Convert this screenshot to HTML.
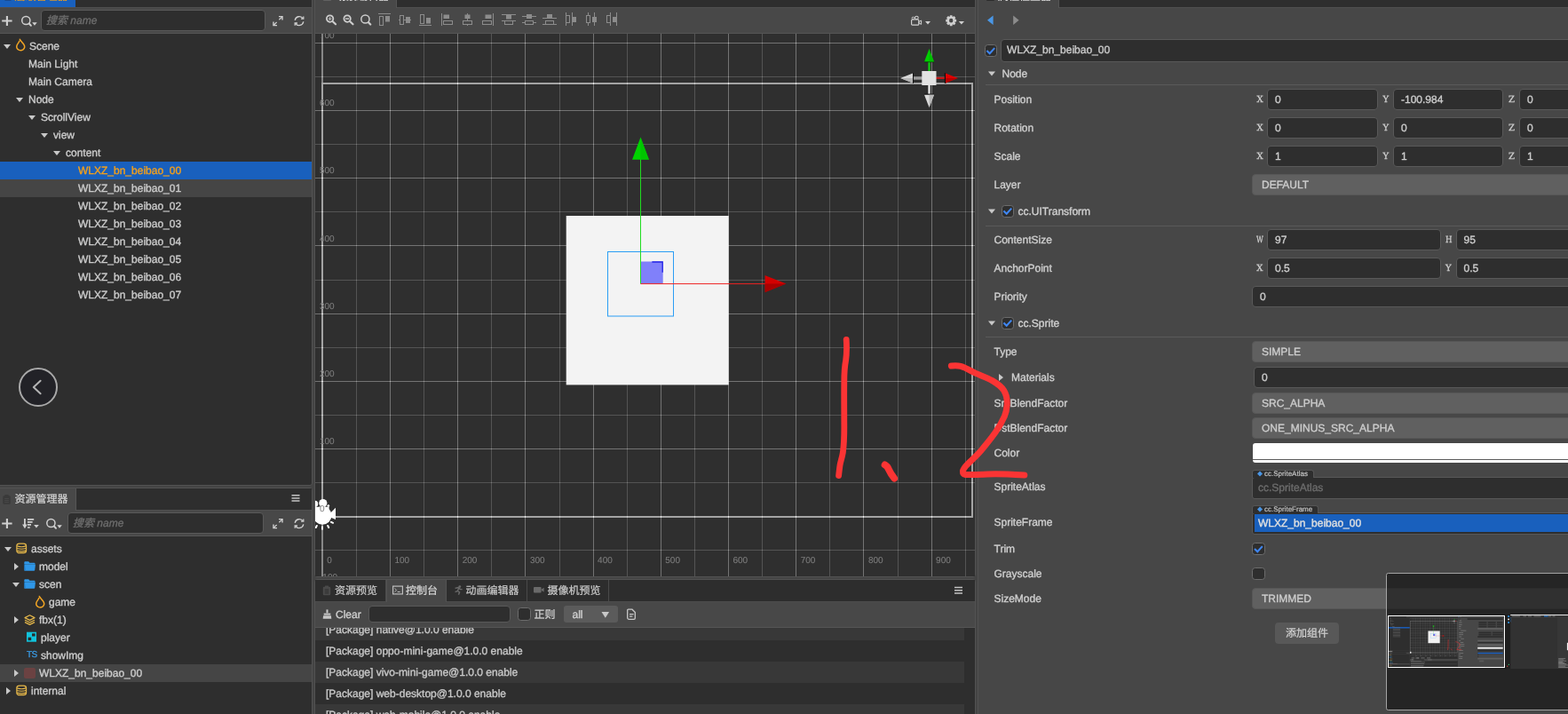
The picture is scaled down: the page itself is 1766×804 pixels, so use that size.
<!DOCTYPE html>
<html lang="zh-CN"><head><meta charset="utf-8"><title>Cocos Creator</title>
<style>
*{box-sizing:border-box;margin:0;padding:0}
html,body{width:1766px;height:804px;overflow:hidden;background:#444;-webkit-font-smoothing:antialiased;text-rendering:geometricPrecision}
body{position:relative;font-family:"Liberation Sans","Noto Sans CJK SC",sans-serif;font-size:12px;color:#ccc;line-height:20px;-webkit-text-stroke:0.35px currentColor;}
#app{position:absolute;left:0;top:0;width:1766px;height:804px;overflow:hidden;will-change:transform;transform:translateZ(0)}
.abs{position:absolute}
.panel{position:absolute;background:#2e2e2e;border:1px solid #525252;border-radius:3px;overflow:hidden}
.inp{position:absolute;background:#2e2e2e;border:1px solid #595959;border-radius:4px;color:#ccc;white-space:nowrap;overflow:hidden}
.ph{font-style:italic;color:#6c6c6c;position:absolute;left:5px;top:0;line-height:22px}
.row{position:absolute;left:0;right:0;height:20px;line-height:20px;white-space:nowrap}
.row .t{position:absolute;top:0}
.sel{background:#1960bd}
.hov{background:#454545}
svg{position:absolute;overflow:visible}
.lab{position:absolute;white-space:nowrap;line-height:20px;height:20px}
.mono{font-family:"DejaVu Serif","Liberation Serif",serif;font-size:10px;font-weight:normal;-webkit-text-stroke:0.25px currentColor;position:absolute;line-height:20px;color:#d2d2d2}
.dd{position:absolute;background:#606060;border:1px solid #575757;border-radius:4px;height:24px;line-height:22px;padding-left:10px;color:#ccc;white-space:nowrap;overflow:hidden}
.cb{position:absolute;width:14px;height:14px;background:#2e2e2e;border:1px solid #6c6c6c;border-radius:3.5px}
.cjk{font-weight:400;-webkit-text-stroke:0.22px currentColor}
.gl{position:absolute;font-size:10px;color:#7c7c7c;-webkit-text-stroke:0.1px currentColor;line-height:12px;white-space:nowrap}
</style></head>
<body>
<div id="app">
<div class="panel" style="left:-5px;top:-17px;width:357px;height:564px;"></div>
<div class="abs" style="left:0px;top:-16px;width:351px;height:24px;background:#2e2e2e"></div>
<div class="abs" style="left:0px;top:8px;width:351px;height:1px;background:#4f4f4f"></div>
<div class="abs" style="left:0px;top:-16px;width:85.4px;height:24px;background:#1960bd"></div>
<svg style="left:4px;top:-11px" width="10" height="12" viewBox="-0.5 -0.6 10 12"><rect x="0.3" y="1.2" width="8.4" height="9.6" rx="1.2" fill="#1c3560"/><rect x="2.4" y="0" width="4.2" height="2.2" rx="0.6" fill="#1c3560"/><path d="M2.2 4.4H6.8M2.2 6.4H6.8M2.2 8.4H6.8" stroke="#1a5fbf" stroke-width="0.9"/></svg>
<div class="lab cjk" style="left:16.5px;top:-15px;color:#f5a01a;line-height:23px;height:24px">层级管理器</div>
<div class="abs" style="left:0px;top:9px;width:351px;height:28px;background:#484848"></div>
<div class="abs" style="left:0px;top:37px;width:351px;height:1px;background:#555"></div>
<svg style="left:1px;top:17px" width="13" height="13" viewBox="-0.9 -0.5 13 13"><path d="M6 0.4V11.4M0.3 6H11.7" stroke="#d0d0d0" stroke-width="2.1" fill="none"/></svg>
<svg style="left:23px;top:17px" width="20" height="14" viewBox="-0.9 -0.2 20 14"><circle cx="5.4" cy="5.8" r="4.6" stroke="#d0d0d0" stroke-width="1.5" fill="none"/><path d="M8.9 9.3L11 11.6" stroke="#d0d0d0" stroke-width="2" stroke-linecap="round"/><polygon points="12.3,8.1 17.8,8.1 15.05,11.5" fill="#d0d0d0"/></svg>
<div class="inp" style="left:46px;top:11px;width:253px;height:24px;"><span class="ph">搜索 name</span></div>
<svg style="left:307px;top:17px" width="13" height="13" viewBox="0 -0.6 13 13"><path d="M1 11L4.6 7.4M11 1L7.4 4.6" stroke="#d0d0d0" stroke-width="1.3" fill="none"/><path d="M7 1H11V5" stroke="#d0d0d0" stroke-width="1.4" fill="none"/><path d="M1 7V11H5" stroke="#d0d0d0" stroke-width="1.4" fill="none"/></svg>
<svg style="left:331px;top:17px" width="13" height="13" viewBox="0 -0.6 13 13"><path d="M1.2 5.2A5 5 0 0 1 10.3 3.3" stroke="#d0d0d0" stroke-width="1.3" fill="none"/><path d="M10.8 6.8A5 5 0 0 1 1.7 8.7" stroke="#d0d0d0" stroke-width="1.3" fill="none"/><path d="M8 3.6H10.8V0.8" stroke="#d0d0d0" stroke-width="1.3" fill="none"/><path d="M4 8.4H1.2V11.2" stroke="#d0d0d0" stroke-width="1.3" fill="none"/></svg>
<div class="row" style="top:42px;width:351px"><span class="t" style="left:33px;">Scene</span></div>
<svg style="left:4px;top:50px" width="9" height="6" viewBox="0 0 9 6"><polygon points="0,0 8,0 4.0,5" fill="#c8c8c8"/></svg>
<svg style="left:17px;top:43px" width="12" height="15" viewBox="-0.8 -0.6 12 15"><path d="M4.5 0.7C5.4 2.6 7.8 4.4 9.2 6.8C10.3 8.8 10 10.9 8.2 12.3C6.8 13.3 4.6 13.3 3.3 12.6C1.2 11.4 0.6 9.4 1.2 7.6C1.9 5.6 3.5 4.4 4 2.7" stroke="#f2a524" stroke-width="1.5" fill="none" stroke-linejoin="round" stroke-linecap="round"/></svg>
<div class="row" style="top:62px;width:351px"><span class="t" style="left:32px;">Main Light</span></div>
<div class="row" style="top:82px;width:351px"><span class="t" style="left:32px;">Main Camera</span></div>
<div class="row" style="top:102px;width:351px"><span class="t" style="left:32px;">Node</span></div>
<svg style="left:18px;top:110px" width="9" height="6" viewBox="0 0 9 6"><polygon points="0,0 8,0 4.0,5" fill="#c8c8c8"/></svg>
<div class="row" style="top:122px;width:351px"><span class="t" style="left:46px;">ScrollView</span></div>
<svg style="left:32px;top:130px" width="9" height="6" viewBox="0 0 9 6"><polygon points="0,0 8,0 4.0,5" fill="#c8c8c8"/></svg>
<div class="row" style="top:142px;width:351px"><span class="t" style="left:60px;">view</span></div>
<svg style="left:46px;top:150px" width="9" height="6" viewBox="0 0 9 6"><polygon points="0,0 8,0 4.0,5" fill="#c8c8c8"/></svg>
<div class="row" style="top:162px;width:351px"><span class="t" style="left:74px;">content</span></div>
<svg style="left:60px;top:170px" width="9" height="6" viewBox="0 0 9 6"><polygon points="0,0 8,0 4.0,5" fill="#c8c8c8"/></svg>
<div class="row sel" style="top:182px;width:351px"><span class="t" style="left:88px;color:#f5a01a;">WLXZ_bn_beibao_00</span></div>
<div class="row hov" style="top:202px;width:351px"><span class="t" style="left:88px;">WLXZ_bn_beibao_01</span></div>
<div class="row" style="top:222px;width:351px"><span class="t" style="left:88px;">WLXZ_bn_beibao_02</span></div>
<div class="row" style="top:242px;width:351px"><span class="t" style="left:88px;">WLXZ_bn_beibao_03</span></div>
<div class="row" style="top:262px;width:351px"><span class="t" style="left:88px;">WLXZ_bn_beibao_04</span></div>
<div class="row" style="top:282px;width:351px"><span class="t" style="left:88px;">WLXZ_bn_beibao_05</span></div>
<div class="row" style="top:302px;width:351px"><span class="t" style="left:88px;">WLXZ_bn_beibao_06</span></div>
<div class="row" style="top:322px;width:351px"><span class="t" style="left:88px;">WLXZ_bn_beibao_07</span></div>
<div class="abs" style="left:21px;top:414px;width:44px;height:44px;border:2px solid #a9a9a9;border-radius:50%;background:#222227"></div>
<svg style="left:21px;top:414px" width="45" height="45" viewBox="0 0 45 45"><path d="M24.6 14.8L16.8 22L24.6 29.2" stroke="#b4b4b4" stroke-width="2" fill="none" stroke-linecap="round" stroke-linejoin="round"/></svg>
<div class="panel" style="left:-5px;top:549px;width:357px;height:270px;"></div>
<div class="abs" style="left:0px;top:550px;width:351px;height:24px;background:#2e2e2e"></div>
<div class="abs" style="left:0px;top:574px;width:351px;height:1px;background:#4f4f4f"></div>
<div class="abs" style="left:0px;top:550px;width:86px;height:25px;background:#484848;border-right:1px solid #555"></div>
<svg style="left:3px;top:557px" width="10" height="12" viewBox="0 0 10 12"><rect x="0.3" y="1.2" width="8.4" height="9.6" rx="1.2" fill="#3a3a3a"/><rect x="2.4" y="0" width="4.2" height="2.2" rx="0.6" fill="#3a3a3a"/><path d="M2.2 4.4H6.8M2.2 6.4H6.8M2.2 8.4H6.8" stroke="#4c4c4c" stroke-width="0.9"/></svg>
<div class="lab cjk" style="left:16.5px;top:551px;color:#d2d2d2;line-height:23px;height:24px">资源管理器</div>
<svg style="left:328px;top:556px" width="10" height="10" viewBox="-0.5 -0.5 10 10"><path d="M0 1.2H9M0 4.4H9M0 7.6H9" stroke="#c4c4c4" stroke-width="1.5"/></svg>
<div class="abs" style="left:0px;top:575px;width:351px;height:28px;background:#484848"></div>
<div class="abs" style="left:0px;top:603px;width:351px;height:1px;background:#555"></div>
<svg style="left:1px;top:583px" width="13" height="13" viewBox="-0.9 -0.5 13 13"><path d="M6 0.4V11.4M0.3 6H11.7" stroke="#d0d0d0" stroke-width="2.1" fill="none"/></svg>
<svg style="left:25px;top:584px" width="20" height="13" viewBox="0 0 20 13"><path d="M2.9 0V9" stroke="#d0d0d0" stroke-width="1.8"/><path d="M0.1 6.6L2.9 11.2L5.7 6.6Z" fill="#d0d0d0"/><path d="M6 0.9H13.2M6 3.9H11.6M6 6.9H10M6 10H8.8" stroke="#d0d0d0" stroke-width="1.7"/><polygon points="13.1,7.1 18.8,7.1 15.95,10.5" fill="#d0d0d0"/></svg>
<svg style="left:52px;top:583px" width="20" height="14" viewBox="0 -0.2 20 14"><circle cx="5.4" cy="5.8" r="4.6" stroke="#d0d0d0" stroke-width="1.5" fill="none"/><path d="M8.9 9.3L11 11.6" stroke="#d0d0d0" stroke-width="2" stroke-linecap="round"/><polygon points="12.3,8.1 17.8,8.1 15.05,11.5" fill="#d0d0d0"/></svg>
<div class="inp" style="left:76px;top:577px;width:221px;height:24px;"><span class="ph">搜索 name</span></div>
<svg style="left:307px;top:583px" width="13" height="13" viewBox="0 -0.6 13 13"><path d="M1 11L4.6 7.4M11 1L7.4 4.6" stroke="#d0d0d0" stroke-width="1.3" fill="none"/><path d="M7 1H11V5" stroke="#d0d0d0" stroke-width="1.4" fill="none"/><path d="M1 7V11H5" stroke="#d0d0d0" stroke-width="1.4" fill="none"/></svg>
<svg style="left:331px;top:583px" width="13" height="13" viewBox="0 -0.6 13 13"><path d="M1.2 5.2A5 5 0 0 1 10.3 3.3" stroke="#d0d0d0" stroke-width="1.3" fill="none"/><path d="M10.8 6.8A5 5 0 0 1 1.7 8.7" stroke="#d0d0d0" stroke-width="1.3" fill="none"/><path d="M8 3.6H10.8V0.8" stroke="#d0d0d0" stroke-width="1.3" fill="none"/><path d="M4 8.4H1.2V11.2" stroke="#d0d0d0" stroke-width="1.3" fill="none"/></svg>
<div class="row" style="top:608px;width:351px"><span class="t" style="left:35px">assets</span></div>
<svg style="left:5px;top:616px" width="9" height="6" viewBox="0 0 9 6"><polygon points="0,0 8,0 4.0,5" fill="#c8c8c8"/></svg>
<svg style="left:18px;top:611px" width="13" height="13" viewBox="-0.2 -0.4 13 13"><rect x="0.7" y="0.7" width="10.6" height="10.6" rx="3" ry="2.4" stroke="#e6b84a" stroke-width="1.3" fill="none"/><path d="M1 3.4C3 4.6 9 4.6 11 3.4" stroke="#e6b84a" stroke-width="1.1" fill="none"/><path d="M1 6C3 7.2 9 7.2 11 6" stroke="#e6b84a" stroke-width="1.1" fill="none"/><path d="M1 8.6C3 9.799999999999999 9 9.799999999999999 11 8.6" stroke="#e6b84a" stroke-width="1.1" fill="none"/></svg>
<div class="row" style="top:628px;width:351px"><span class="t" style="left:44px">model</span></div>
<svg style="left:16px;top:634px" width="6" height="9" viewBox="0 0 6 9"><polygon points="0,0 5,4.0 0,8" fill="#c8c8c8"/></svg>
<svg style="left:27px;top:632px" width="14" height="12" viewBox="0 0 14 12"><path d="M0.3 1.2C0.3 0.7 0.7 0.3 1.2 0.3H5.2L6.4 1.8H11.6C12.1 1.8 12.5 2.2 12.5 2.7V3.6H0.3Z" fill="#2f97e8"/><path d="M1.3 3.4H12.4C12.8 3.4 13 3.7 12.9 4.1L12.2 10C12.1 10.5 11.8 10.8 11.3 10.8H1.2C0.7 10.8 0.3 10.4 0.3 9.9V4.4Z" fill="#2f97e8"/><path d="M0.3 3.5L1.2 10.2" stroke="#1d6fb4" stroke-width="0.8" fill="none"/></svg>
<div class="row" style="top:648px;width:351px"><span class="t" style="left:44px">scen</span></div>
<svg style="left:14px;top:656px" width="9" height="6" viewBox="0 0 9 6"><polygon points="0,0 8,0 4.0,5" fill="#c8c8c8"/></svg>
<svg style="left:27px;top:652px" width="14" height="12" viewBox="0 0 14 12"><path d="M0.3 1.2C0.3 0.7 0.7 0.3 1.2 0.3H5.2L6.4 1.8H11.6C12.1 1.8 12.5 2.2 12.5 2.7V3.6H0.3Z" fill="#2f97e8"/><path d="M1.3 3.4H12.4C12.8 3.4 13 3.7 12.9 4.1L12.2 10C12.1 10.5 11.8 10.8 11.3 10.8H1.2C0.7 10.8 0.3 10.4 0.3 9.9V4.4Z" fill="#2f97e8"/><path d="M0.3 3.5L1.2 10.2" stroke="#1d6fb4" stroke-width="0.8" fill="none"/></svg>
<div class="row" style="top:668px;width:351px"><span class="t" style="left:55px">game</span></div>
<svg style="left:39px;top:670px" width="12" height="15" viewBox="-0.8 -0.8 12 15"><path d="M4.5 0.7C5.4 2.6 7.8 4.4 9.2 6.8C10.3 8.8 10 10.9 8.2 12.3C6.8 13.3 4.6 13.3 3.3 12.6C1.2 11.4 0.6 9.4 1.2 7.6C1.9 5.6 3.5 4.4 4 2.7" stroke="#f2a524" stroke-width="1.5" fill="none" stroke-linejoin="round" stroke-linecap="round"/></svg>
<div class="row" style="top:688px;width:351px"><span class="t" style="left:44px">fbx(1)</span></div>
<svg style="left:16px;top:694px" width="6" height="9" viewBox="0 0 6 9"><polygon points="0,0 5,4.0 0,8" fill="#c8c8c8"/></svg>
<svg style="left:27px;top:692px" width="14" height="13" viewBox="0 0 14 13"><path d="M6.5 0.8L12 3.6L6.5 6.4L1 3.6Z" stroke="#e6b84a" stroke-width="1.2" fill="none" stroke-linejoin="round"/><path d="M1 6.2L6.5 9L12 6.2" stroke="#e6b84a" stroke-width="1.2" fill="none" stroke-linejoin="round"/><path d="M1 8.6L6.5 11.4L12 8.6" stroke="#e6b84a" stroke-width="1.2" fill="none" stroke-linejoin="round"/></svg>
<div class="row" style="top:708px;width:351px"><span class="t" style="left:46px">player</span></div>
<svg style="left:30px;top:711px" width="12" height="12" viewBox="0 -0.7 12 12"><rect x="0" y="0" width="11" height="11" fill="#11c3dc"/><rect x="6" y="1.6" width="3.6" height="3.2" fill="#2b2b2b"/><rect x="1.6" y="6" width="3.6" height="3.4" fill="#2b2b2b"/></svg>
<div class="row" style="top:728px;width:351px"><span class="t" style="left:46px">showImg</span></div>
<div class="lab" style="left:30px;top:728px;color:#3a9be6;font-size:10px;letter-spacing:-0.6px;-webkit-text-stroke:0.3px currentColor">TS</div>
<div class="row hov" style="top:748px;width:351px"><span class="t" style="left:44px">WLXZ_bn_beibao_00</span></div>
<svg style="left:16px;top:754px" width="6" height="9" viewBox="0 0 6 9"><polygon points="0,0 5,4.0 0,8" fill="#c8c8c8"/></svg>
<div class="abs" style="left:27px;top:752px;width:13px;height:12px;background:#6b4242;border-radius:2px"></div>
<div class="row" style="top:768px;width:351px"><span class="t" style="left:35px">internal</span></div>
<svg style="left:7px;top:774px" width="6" height="9" viewBox="0 0 6 9"><polygon points="0,0 5,4.0 0,8" fill="#c8c8c8"/></svg>
<svg style="left:18px;top:771px" width="13" height="13" viewBox="-0.2 -0.4 13 13"><rect x="0.7" y="0.7" width="10.6" height="10.6" rx="3" ry="2.4" stroke="#e6b84a" stroke-width="1.3" fill="none"/><path d="M1 3.4C3 4.6 9 4.6 11 3.4" stroke="#e6b84a" stroke-width="1.1" fill="none"/><path d="M1 6C3 7.2 9 7.2 11 6" stroke="#e6b84a" stroke-width="1.1" fill="none"/><path d="M1 8.6C3 9.799999999999999 9 9.799999999999999 11 8.6" stroke="#e6b84a" stroke-width="1.1" fill="none"/></svg>
<div class="panel" style="left:354px;top:-17px;width:745px;height:667px;"></div>
<div class="abs" style="left:355px;top:-16px;width:743px;height:24px;background:#2e2e2e"></div>
<div class="abs" style="left:355px;top:8px;width:743px;height:1px;background:#4f4f4f"></div>
<div class="abs" style="left:355px;top:-16px;width:92px;height:25px;background:#484848;border-right:1px solid #555"></div>
<div class="abs" style="left:363.5px;top:-8.4px;width:9px;height:9px;background:#626262;border-radius:1px"></div>
<div class="lab cjk" style="left:378px;top:-15px;color:#e2e2e2;line-height:23px;height:24px">场景编辑器</div>
<div class="abs" style="left:355px;top:9px;width:743px;height:28px;background:#484848"></div>
<div class="abs" style="left:355px;top:37px;width:743px;height:1px;background:#555"></div>
<svg style="left:367px;top:16px" width="13" height="13" viewBox="0 -0.3 13 13"><circle cx="4.6" cy="4.8" r="3.7" stroke="#cdcdcd" stroke-width="1.8" fill="none"/><path d="M7.8 8L11 11" stroke="#cdcdcd" stroke-width="2.2" stroke-linecap="round"/><path d="M2.8 4.8H6.4M4.6 3V6.6" stroke="#b0b0b0" stroke-width="1.3"/></svg>
<svg style="left:386px;top:16px" width="13" height="13" viewBox="-0.5 -0.3 13 13"><circle cx="4.6" cy="4.8" r="3.7" stroke="#cdcdcd" stroke-width="1.8" fill="none"/><path d="M7.8 8L11 11" stroke="#cdcdcd" stroke-width="2.2" stroke-linecap="round"/><path d="M2.6 4.8H6.6" stroke="#cdcdcd" stroke-width="1.5"/></svg>
<svg style="left:406px;top:16px" width="13" height="13" viewBox="0 -0.3 13 13"><circle cx="5.4" cy="5.2" r="4.6" stroke="#cdcdcd" stroke-width="1.5" fill="none"/><path d="M9 9L11.2 11.2" stroke="#cdcdcd" stroke-width="2.3" stroke-linecap="round"/></svg>
<svg style="left:426px;top:15px" width="15" height="15" viewBox="0 0 15 15"><path d="M0 0.5H14" stroke="#8c8c8c" stroke-width="1" fill="none"/><rect x="1.5" y="3.5" width="4" height="10" stroke="#8c8c8c" stroke-width="1" fill="none"/><rect x="8" y="3" width="5" height="6.5" fill="#8c8c8c"/></svg><svg style="left:449px;top:15px" width="15" height="15" viewBox="0 0 15 15"><path d="M0 7.5H14" stroke="#8c8c8c" stroke-width="1" fill="none"/><rect x="1.5" y="2.5" width="4" height="10" fill="#484848" stroke="#8c8c8c"/><rect x="8" y="4" width="5" height="7" fill="#8c8c8c"/></svg><svg style="left:472px;top:15px" width="15" height="15" viewBox="0 0 15 15"><path d="M0 13.5H14" stroke="#8c8c8c" stroke-width="1" fill="none"/><rect x="1.5" y="1.5" width="4" height="10" stroke="#8c8c8c" stroke-width="1" fill="none"/><rect x="8" y="5" width="5" height="6.5" fill="#8c8c8c"/></svg><svg style="left:497px;top:15px" width="15" height="15" viewBox="0 0 15 15"><path d="M0.5 0V14" stroke="#8c8c8c" stroke-width="1" fill="none"/><rect x="2.5" y="1.5" width="6.5" height="4.5" fill="#8c8c8c"/><rect x="2.5" y="8.5" width="10" height="4" stroke="#8c8c8c" stroke-width="1" fill="none"/></svg><svg style="left:520px;top:15px" width="14" height="15" viewBox="0 0 14 15"><path d="M6.5 0V14" stroke="#8c8c8c" stroke-width="1" fill="none"/><rect x="3.5" y="1.5" width="6" height="4.5" fill="#8c8c8c"/><rect x="1.5" y="8.5" width="10" height="4" fill="#484848" stroke="#8c8c8c"/></svg><svg style="left:542px;top:15px" width="15" height="15" viewBox="0 0 15 15"><path d="M13.5 0V14" stroke="#8c8c8c" stroke-width="1" fill="none"/><rect x="4.5" y="1.5" width="7" height="4.5" fill="#8c8c8c"/><rect x="1.5" y="8.5" width="10" height="4" stroke="#8c8c8c" stroke-width="1" fill="none"/></svg><svg style="left:565px;top:15px" width="17" height="15" viewBox="0 0 17 15"><path d="M0 1.5H16M0 8.5H16" stroke="#8c8c8c" stroke-width="1" fill="none"/><rect x="5" y="2" width="6" height="4.5" fill="#8c8c8c"/><rect x="3.5" y="8.5" width="9" height="4" stroke="#8c8c8c" stroke-width="1" fill="none"/></svg><svg style="left:588px;top:15px" width="17" height="15" viewBox="0 0 17 15"><path d="M0 3.5H16M0 10.5H16" stroke="#8c8c8c" stroke-width="1" fill="none"/><rect x="5" y="1" width="6" height="5" fill="#8c8c8c"/><rect x="3.5" y="8.5" width="9" height="4" fill="#484848" stroke="#8c8c8c"/></svg><svg style="left:611px;top:15px" width="17" height="15" viewBox="0 0 17 15"><path d="M0 5.5H16M0 12.5H16" stroke="#8c8c8c" stroke-width="1" fill="none"/><rect x="5" y="1" width="6" height="4.5" fill="#8c8c8c"/><rect x="3.5" y="8.5" width="9" height="4" stroke="#8c8c8c" stroke-width="1" fill="none"/></svg><svg style="left:636px;top:14px" width="15" height="16" viewBox="0 0 15 16"><path d="M1.5 0V15M8.5 0V15" stroke="#8c8c8c" stroke-width="1" fill="none"/><rect x="1.5" y="3.5" width="4" height="8" stroke="#8c8c8c" stroke-width="1" fill="none"/><rect x="8.5" y="5" width="4.5" height="6" fill="#8c8c8c"/></svg><svg style="left:659px;top:14px" width="15" height="16" viewBox="0 0 15 16"><path d="M3.5 0V15M10.5 0V15" stroke="#8c8c8c" stroke-width="1" fill="none"/><rect x="1.5" y="3.5" width="4" height="8" fill="#484848" stroke="#8c8c8c"/><rect x="8" y="5" width="5" height="6" fill="#8c8c8c"/></svg><svg style="left:682px;top:14px" width="15" height="16" viewBox="0 0 15 16"><path d="M5.5 0V15M12.5 0V15" stroke="#8c8c8c" stroke-width="1" fill="none"/><rect x="1.5" y="3.5" width="4" height="8" stroke="#8c8c8c" stroke-width="1" fill="none"/><rect x="8" y="5" width="4.5" height="6" fill="#8c8c8c"/></svg>
<svg style="left:1026px;top:18px" width="13" height="12" viewBox="0 0 13 12"><rect x="0.6" y="4" width="8.2" height="6.2" rx="1" stroke="#cfcfcf" stroke-width="1.2" fill="none"/><circle cx="2.4" cy="2.5" r="1.3" stroke="#cfcfcf" stroke-width="1" fill="none"/><circle cx="6.4" cy="2" r="1.8" stroke="#cfcfcf" stroke-width="1.1" fill="none"/><path d="M9 6.4L11.6 5V9.4L9 8Z" stroke="#cfcfcf" stroke-width="1" fill="none"/></svg>
<svg style="left:1042px;top:24px" width="7" height="4.4" viewBox="0 0 7 4.4"><polygon points="0,0 6,0 3.0,3.4" fill="#cfcfcf"/></svg>
<svg style="left:1065px;top:17px" width="13" height="13" viewBox="-0.2 -0.2 13 13"><path fill-rule="evenodd" d="M11.97,4.73 L11.97,7.27 L10.20,7.63 L10.12,7.82 L11.12,9.32 L9.32,11.12 L7.82,10.12 L7.63,10.20 L7.27,11.97 L4.73,11.97 L4.37,10.20 L4.18,10.12 L2.68,11.12 L0.88,9.32 L1.88,7.82 L1.80,7.63 L0.03,7.27 L0.03,4.73 L1.80,4.37 L1.88,4.18 L0.88,2.68 L2.68,0.88 L4.18,1.88 L4.37,1.80 L4.73,0.03 L7.27,0.03 L7.63,1.80 L7.82,1.88 L9.32,0.88 L11.12,2.68 L10.12,4.18 L10.20,4.37Z M6 3.6A2.2 2.4 0 1 0 6 8.4A2.2 2.4 0 1 0 6 3.6Z" fill="#cfcfcf"/></svg>
<svg style="left:1079px;top:24px" width="7.2" height="4.4" viewBox="-0.8 0 7.2 4.4"><polygon points="0,0 6.2,0 3.1,3.4" fill="#cfcfcf"/></svg>
<div class="abs" style="left:355px;top:38px;width:743px;height:611px;overflow:hidden;background:#2f2f2f"><svg style="left:0;top:0" width="743" height="611" viewBox="0 0 743 611"><rect x="46" y="0" width="1" height="611" fill="#545454"/><rect x="84" y="0" width="1" height="611" fill="#737373"/><rect x="122" y="0" width="1" height="611" fill="#545454"/><rect x="160" y="0" width="1" height="611" fill="#737373"/><rect x="198" y="0" width="1" height="611" fill="#545454"/><rect x="236" y="0" width="1" height="611" fill="#737373"/><rect x="275" y="0" width="1" height="611" fill="#545454"/><rect x="313" y="0" width="1" height="611" fill="#737373"/><rect x="351" y="0" width="1" height="611" fill="#545454"/><rect x="389" y="0" width="1" height="611" fill="#737373"/><rect x="427" y="0" width="1" height="611" fill="#545454"/><rect x="465" y="0" width="1" height="611" fill="#737373"/><rect x="503" y="0" width="1" height="611" fill="#545454"/><rect x="541" y="0" width="1" height="611" fill="#737373"/><rect x="579" y="0" width="1" height="611" fill="#545454"/><rect x="617" y="0" width="1" height="611" fill="#737373"/><rect x="656" y="0" width="1" height="611" fill="#545454"/><rect x="694" y="0" width="1" height="611" fill="#737373"/><rect x="732" y="0" width="1" height="611" fill="#545454"/><rect x="7" y="0" width="2" height="55" fill="#878787"/><rect x="7" y="545" width="2" height="66" fill="#878787"/><rect x="7" y="55" width="2" height="490" fill="#a4a4a4"/><rect x="739" y="55" width="2" height="490" fill="#a4a4a4"/><rect x="0" y="581" width="743" height="1" fill="#545454"/><rect x="0" y="505" width="743" height="1" fill="#545454"/><rect x="0" y="467" width="743" height="1" fill="#737373"/><rect x="0" y="429" width="743" height="1" fill="#545454"/><rect x="0" y="391" width="743" height="1" fill="#737373"/><rect x="0" y="353" width="743" height="1" fill="#545454"/><rect x="0" y="315" width="743" height="1" fill="#737373"/><rect x="0" y="277" width="743" height="1" fill="#545454"/><rect x="0" y="238" width="743" height="1" fill="#737373"/><rect x="0" y="200" width="743" height="1" fill="#545454"/><rect x="0" y="162" width="743" height="1" fill="#737373"/><rect x="0" y="124" width="743" height="1" fill="#545454"/><rect x="0" y="86" width="743" height="1" fill="#737373"/><rect x="0" y="48" width="743" height="1" fill="#545454"/><rect x="0" y="10" width="743" height="1" fill="#737373"/><rect x="7" y="55" width="734" height="2" fill="#a4a4a4"/><rect x="7" y="543" width="734" height="2" fill="#a4a4a4"/><rect x="46" y="581" width="1" height="1" fill="#797979"/><rect x="46" y="505" width="1" height="1" fill="#797979"/><rect x="46" y="467" width="1" height="1" fill="#989898"/><rect x="46" y="429" width="1" height="1" fill="#797979"/><rect x="46" y="391" width="1" height="1" fill="#989898"/><rect x="46" y="353" width="1" height="1" fill="#797979"/><rect x="46" y="315" width="1" height="1" fill="#989898"/><rect x="46" y="277" width="1" height="1" fill="#797979"/><rect x="46" y="238" width="1" height="1" fill="#989898"/><rect x="46" y="200" width="1" height="1" fill="#797979"/><rect x="46" y="162" width="1" height="1" fill="#989898"/><rect x="46" y="124" width="1" height="1" fill="#797979"/><rect x="46" y="86" width="1" height="1" fill="#989898"/><rect x="46" y="48" width="1" height="1" fill="#797979"/><rect x="46" y="10" width="1" height="1" fill="#989898"/><rect x="46" y="55" width="1" height="2" fill="#c9c9c9"/><rect x="46" y="543" width="1" height="2" fill="#c9c9c9"/><rect x="84" y="581" width="1" height="1" fill="#989898"/><rect x="84" y="505" width="1" height="1" fill="#989898"/><rect x="84" y="467" width="1" height="1" fill="#b7b7b7"/><rect x="84" y="429" width="1" height="1" fill="#989898"/><rect x="84" y="391" width="1" height="1" fill="#b7b7b7"/><rect x="84" y="353" width="1" height="1" fill="#989898"/><rect x="84" y="315" width="1" height="1" fill="#b7b7b7"/><rect x="84" y="277" width="1" height="1" fill="#989898"/><rect x="84" y="238" width="1" height="1" fill="#b7b7b7"/><rect x="84" y="200" width="1" height="1" fill="#989898"/><rect x="84" y="162" width="1" height="1" fill="#b7b7b7"/><rect x="84" y="124" width="1" height="1" fill="#989898"/><rect x="84" y="86" width="1" height="1" fill="#b7b7b7"/><rect x="84" y="48" width="1" height="1" fill="#989898"/><rect x="84" y="10" width="1" height="1" fill="#b7b7b7"/><rect x="84" y="55" width="1" height="2" fill="#e8e8e8"/><rect x="84" y="543" width="1" height="2" fill="#e8e8e8"/><rect x="122" y="581" width="1" height="1" fill="#797979"/><rect x="122" y="505" width="1" height="1" fill="#797979"/><rect x="122" y="467" width="1" height="1" fill="#989898"/><rect x="122" y="429" width="1" height="1" fill="#797979"/><rect x="122" y="391" width="1" height="1" fill="#989898"/><rect x="122" y="353" width="1" height="1" fill="#797979"/><rect x="122" y="315" width="1" height="1" fill="#989898"/><rect x="122" y="277" width="1" height="1" fill="#797979"/><rect x="122" y="238" width="1" height="1" fill="#989898"/><rect x="122" y="200" width="1" height="1" fill="#797979"/><rect x="122" y="162" width="1" height="1" fill="#989898"/><rect x="122" y="124" width="1" height="1" fill="#797979"/><rect x="122" y="86" width="1" height="1" fill="#989898"/><rect x="122" y="48" width="1" height="1" fill="#797979"/><rect x="122" y="10" width="1" height="1" fill="#989898"/><rect x="122" y="55" width="1" height="2" fill="#c9c9c9"/><rect x="122" y="543" width="1" height="2" fill="#c9c9c9"/><rect x="160" y="581" width="1" height="1" fill="#989898"/><rect x="160" y="505" width="1" height="1" fill="#989898"/><rect x="160" y="467" width="1" height="1" fill="#b7b7b7"/><rect x="160" y="429" width="1" height="1" fill="#989898"/><rect x="160" y="391" width="1" height="1" fill="#b7b7b7"/><rect x="160" y="353" width="1" height="1" fill="#989898"/><rect x="160" y="315" width="1" height="1" fill="#b7b7b7"/><rect x="160" y="277" width="1" height="1" fill="#989898"/><rect x="160" y="238" width="1" height="1" fill="#b7b7b7"/><rect x="160" y="200" width="1" height="1" fill="#989898"/><rect x="160" y="162" width="1" height="1" fill="#b7b7b7"/><rect x="160" y="124" width="1" height="1" fill="#989898"/><rect x="160" y="86" width="1" height="1" fill="#b7b7b7"/><rect x="160" y="48" width="1" height="1" fill="#989898"/><rect x="160" y="10" width="1" height="1" fill="#b7b7b7"/><rect x="160" y="55" width="1" height="2" fill="#e8e8e8"/><rect x="160" y="543" width="1" height="2" fill="#e8e8e8"/><rect x="198" y="581" width="1" height="1" fill="#797979"/><rect x="198" y="505" width="1" height="1" fill="#797979"/><rect x="198" y="467" width="1" height="1" fill="#989898"/><rect x="198" y="429" width="1" height="1" fill="#797979"/><rect x="198" y="391" width="1" height="1" fill="#989898"/><rect x="198" y="353" width="1" height="1" fill="#797979"/><rect x="198" y="315" width="1" height="1" fill="#989898"/><rect x="198" y="277" width="1" height="1" fill="#797979"/><rect x="198" y="238" width="1" height="1" fill="#989898"/><rect x="198" y="200" width="1" height="1" fill="#797979"/><rect x="198" y="162" width="1" height="1" fill="#989898"/><rect x="198" y="124" width="1" height="1" fill="#797979"/><rect x="198" y="86" width="1" height="1" fill="#989898"/><rect x="198" y="48" width="1" height="1" fill="#797979"/><rect x="198" y="10" width="1" height="1" fill="#989898"/><rect x="198" y="55" width="1" height="2" fill="#c9c9c9"/><rect x="198" y="543" width="1" height="2" fill="#c9c9c9"/><rect x="236" y="581" width="1" height="1" fill="#989898"/><rect x="236" y="505" width="1" height="1" fill="#989898"/><rect x="236" y="467" width="1" height="1" fill="#b7b7b7"/><rect x="236" y="429" width="1" height="1" fill="#989898"/><rect x="236" y="391" width="1" height="1" fill="#b7b7b7"/><rect x="236" y="353" width="1" height="1" fill="#989898"/><rect x="236" y="315" width="1" height="1" fill="#b7b7b7"/><rect x="236" y="277" width="1" height="1" fill="#989898"/><rect x="236" y="238" width="1" height="1" fill="#b7b7b7"/><rect x="236" y="200" width="1" height="1" fill="#989898"/><rect x="236" y="162" width="1" height="1" fill="#b7b7b7"/><rect x="236" y="124" width="1" height="1" fill="#989898"/><rect x="236" y="86" width="1" height="1" fill="#b7b7b7"/><rect x="236" y="48" width="1" height="1" fill="#989898"/><rect x="236" y="10" width="1" height="1" fill="#b7b7b7"/><rect x="236" y="55" width="1" height="2" fill="#e8e8e8"/><rect x="236" y="543" width="1" height="2" fill="#e8e8e8"/><rect x="275" y="581" width="1" height="1" fill="#797979"/><rect x="275" y="505" width="1" height="1" fill="#797979"/><rect x="275" y="467" width="1" height="1" fill="#989898"/><rect x="275" y="429" width="1" height="1" fill="#797979"/><rect x="275" y="391" width="1" height="1" fill="#989898"/><rect x="275" y="353" width="1" height="1" fill="#797979"/><rect x="275" y="315" width="1" height="1" fill="#989898"/><rect x="275" y="277" width="1" height="1" fill="#797979"/><rect x="275" y="238" width="1" height="1" fill="#989898"/><rect x="275" y="200" width="1" height="1" fill="#797979"/><rect x="275" y="162" width="1" height="1" fill="#989898"/><rect x="275" y="124" width="1" height="1" fill="#797979"/><rect x="275" y="86" width="1" height="1" fill="#989898"/><rect x="275" y="48" width="1" height="1" fill="#797979"/><rect x="275" y="10" width="1" height="1" fill="#989898"/><rect x="275" y="55" width="1" height="2" fill="#c9c9c9"/><rect x="275" y="543" width="1" height="2" fill="#c9c9c9"/><rect x="313" y="581" width="1" height="1" fill="#989898"/><rect x="313" y="505" width="1" height="1" fill="#989898"/><rect x="313" y="467" width="1" height="1" fill="#b7b7b7"/><rect x="313" y="429" width="1" height="1" fill="#989898"/><rect x="313" y="391" width="1" height="1" fill="#b7b7b7"/><rect x="313" y="353" width="1" height="1" fill="#989898"/><rect x="313" y="315" width="1" height="1" fill="#b7b7b7"/><rect x="313" y="277" width="1" height="1" fill="#989898"/><rect x="313" y="238" width="1" height="1" fill="#b7b7b7"/><rect x="313" y="200" width="1" height="1" fill="#989898"/><rect x="313" y="162" width="1" height="1" fill="#b7b7b7"/><rect x="313" y="124" width="1" height="1" fill="#989898"/><rect x="313" y="86" width="1" height="1" fill="#b7b7b7"/><rect x="313" y="48" width="1" height="1" fill="#989898"/><rect x="313" y="10" width="1" height="1" fill="#b7b7b7"/><rect x="313" y="55" width="1" height="2" fill="#e8e8e8"/><rect x="313" y="543" width="1" height="2" fill="#e8e8e8"/><rect x="351" y="581" width="1" height="1" fill="#797979"/><rect x="351" y="505" width="1" height="1" fill="#797979"/><rect x="351" y="467" width="1" height="1" fill="#989898"/><rect x="351" y="429" width="1" height="1" fill="#797979"/><rect x="351" y="391" width="1" height="1" fill="#989898"/><rect x="351" y="353" width="1" height="1" fill="#797979"/><rect x="351" y="315" width="1" height="1" fill="#989898"/><rect x="351" y="277" width="1" height="1" fill="#797979"/><rect x="351" y="238" width="1" height="1" fill="#989898"/><rect x="351" y="200" width="1" height="1" fill="#797979"/><rect x="351" y="162" width="1" height="1" fill="#989898"/><rect x="351" y="124" width="1" height="1" fill="#797979"/><rect x="351" y="86" width="1" height="1" fill="#989898"/><rect x="351" y="48" width="1" height="1" fill="#797979"/><rect x="351" y="10" width="1" height="1" fill="#989898"/><rect x="351" y="55" width="1" height="2" fill="#c9c9c9"/><rect x="351" y="543" width="1" height="2" fill="#c9c9c9"/><rect x="389" y="581" width="1" height="1" fill="#989898"/><rect x="389" y="505" width="1" height="1" fill="#989898"/><rect x="389" y="467" width="1" height="1" fill="#b7b7b7"/><rect x="389" y="429" width="1" height="1" fill="#989898"/><rect x="389" y="391" width="1" height="1" fill="#b7b7b7"/><rect x="389" y="353" width="1" height="1" fill="#989898"/><rect x="389" y="315" width="1" height="1" fill="#b7b7b7"/><rect x="389" y="277" width="1" height="1" fill="#989898"/><rect x="389" y="238" width="1" height="1" fill="#b7b7b7"/><rect x="389" y="200" width="1" height="1" fill="#989898"/><rect x="389" y="162" width="1" height="1" fill="#b7b7b7"/><rect x="389" y="124" width="1" height="1" fill="#989898"/><rect x="389" y="86" width="1" height="1" fill="#b7b7b7"/><rect x="389" y="48" width="1" height="1" fill="#989898"/><rect x="389" y="10" width="1" height="1" fill="#b7b7b7"/><rect x="389" y="55" width="1" height="2" fill="#e8e8e8"/><rect x="389" y="543" width="1" height="2" fill="#e8e8e8"/><rect x="427" y="581" width="1" height="1" fill="#797979"/><rect x="427" y="505" width="1" height="1" fill="#797979"/><rect x="427" y="467" width="1" height="1" fill="#989898"/><rect x="427" y="429" width="1" height="1" fill="#797979"/><rect x="427" y="391" width="1" height="1" fill="#989898"/><rect x="427" y="353" width="1" height="1" fill="#797979"/><rect x="427" y="315" width="1" height="1" fill="#989898"/><rect x="427" y="277" width="1" height="1" fill="#797979"/><rect x="427" y="238" width="1" height="1" fill="#989898"/><rect x="427" y="200" width="1" height="1" fill="#797979"/><rect x="427" y="162" width="1" height="1" fill="#989898"/><rect x="427" y="124" width="1" height="1" fill="#797979"/><rect x="427" y="86" width="1" height="1" fill="#989898"/><rect x="427" y="48" width="1" height="1" fill="#797979"/><rect x="427" y="10" width="1" height="1" fill="#989898"/><rect x="427" y="55" width="1" height="2" fill="#c9c9c9"/><rect x="427" y="543" width="1" height="2" fill="#c9c9c9"/><rect x="465" y="581" width="1" height="1" fill="#989898"/><rect x="465" y="505" width="1" height="1" fill="#989898"/><rect x="465" y="467" width="1" height="1" fill="#b7b7b7"/><rect x="465" y="429" width="1" height="1" fill="#989898"/><rect x="465" y="391" width="1" height="1" fill="#b7b7b7"/><rect x="465" y="353" width="1" height="1" fill="#989898"/><rect x="465" y="315" width="1" height="1" fill="#b7b7b7"/><rect x="465" y="277" width="1" height="1" fill="#989898"/><rect x="465" y="238" width="1" height="1" fill="#b7b7b7"/><rect x="465" y="200" width="1" height="1" fill="#989898"/><rect x="465" y="162" width="1" height="1" fill="#b7b7b7"/><rect x="465" y="124" width="1" height="1" fill="#989898"/><rect x="465" y="86" width="1" height="1" fill="#b7b7b7"/><rect x="465" y="48" width="1" height="1" fill="#989898"/><rect x="465" y="10" width="1" height="1" fill="#b7b7b7"/><rect x="465" y="55" width="1" height="2" fill="#e8e8e8"/><rect x="465" y="543" width="1" height="2" fill="#e8e8e8"/><rect x="503" y="581" width="1" height="1" fill="#797979"/><rect x="503" y="505" width="1" height="1" fill="#797979"/><rect x="503" y="467" width="1" height="1" fill="#989898"/><rect x="503" y="429" width="1" height="1" fill="#797979"/><rect x="503" y="391" width="1" height="1" fill="#989898"/><rect x="503" y="353" width="1" height="1" fill="#797979"/><rect x="503" y="315" width="1" height="1" fill="#989898"/><rect x="503" y="277" width="1" height="1" fill="#797979"/><rect x="503" y="238" width="1" height="1" fill="#989898"/><rect x="503" y="200" width="1" height="1" fill="#797979"/><rect x="503" y="162" width="1" height="1" fill="#989898"/><rect x="503" y="124" width="1" height="1" fill="#797979"/><rect x="503" y="86" width="1" height="1" fill="#989898"/><rect x="503" y="48" width="1" height="1" fill="#797979"/><rect x="503" y="10" width="1" height="1" fill="#989898"/><rect x="503" y="55" width="1" height="2" fill="#c9c9c9"/><rect x="503" y="543" width="1" height="2" fill="#c9c9c9"/><rect x="541" y="581" width="1" height="1" fill="#989898"/><rect x="541" y="505" width="1" height="1" fill="#989898"/><rect x="541" y="467" width="1" height="1" fill="#b7b7b7"/><rect x="541" y="429" width="1" height="1" fill="#989898"/><rect x="541" y="391" width="1" height="1" fill="#b7b7b7"/><rect x="541" y="353" width="1" height="1" fill="#989898"/><rect x="541" y="315" width="1" height="1" fill="#b7b7b7"/><rect x="541" y="277" width="1" height="1" fill="#989898"/><rect x="541" y="238" width="1" height="1" fill="#b7b7b7"/><rect x="541" y="200" width="1" height="1" fill="#989898"/><rect x="541" y="162" width="1" height="1" fill="#b7b7b7"/><rect x="541" y="124" width="1" height="1" fill="#989898"/><rect x="541" y="86" width="1" height="1" fill="#b7b7b7"/><rect x="541" y="48" width="1" height="1" fill="#989898"/><rect x="541" y="10" width="1" height="1" fill="#b7b7b7"/><rect x="541" y="55" width="1" height="2" fill="#e8e8e8"/><rect x="541" y="543" width="1" height="2" fill="#e8e8e8"/><rect x="579" y="581" width="1" height="1" fill="#797979"/><rect x="579" y="505" width="1" height="1" fill="#797979"/><rect x="579" y="467" width="1" height="1" fill="#989898"/><rect x="579" y="429" width="1" height="1" fill="#797979"/><rect x="579" y="391" width="1" height="1" fill="#989898"/><rect x="579" y="353" width="1" height="1" fill="#797979"/><rect x="579" y="315" width="1" height="1" fill="#989898"/><rect x="579" y="277" width="1" height="1" fill="#797979"/><rect x="579" y="238" width="1" height="1" fill="#989898"/><rect x="579" y="200" width="1" height="1" fill="#797979"/><rect x="579" y="162" width="1" height="1" fill="#989898"/><rect x="579" y="124" width="1" height="1" fill="#797979"/><rect x="579" y="86" width="1" height="1" fill="#989898"/><rect x="579" y="48" width="1" height="1" fill="#797979"/><rect x="579" y="10" width="1" height="1" fill="#989898"/><rect x="579" y="55" width="1" height="2" fill="#c9c9c9"/><rect x="579" y="543" width="1" height="2" fill="#c9c9c9"/><rect x="617" y="581" width="1" height="1" fill="#989898"/><rect x="617" y="505" width="1" height="1" fill="#989898"/><rect x="617" y="467" width="1" height="1" fill="#b7b7b7"/><rect x="617" y="429" width="1" height="1" fill="#989898"/><rect x="617" y="391" width="1" height="1" fill="#b7b7b7"/><rect x="617" y="353" width="1" height="1" fill="#989898"/><rect x="617" y="315" width="1" height="1" fill="#b7b7b7"/><rect x="617" y="277" width="1" height="1" fill="#989898"/><rect x="617" y="238" width="1" height="1" fill="#b7b7b7"/><rect x="617" y="200" width="1" height="1" fill="#989898"/><rect x="617" y="162" width="1" height="1" fill="#b7b7b7"/><rect x="617" y="124" width="1" height="1" fill="#989898"/><rect x="617" y="86" width="1" height="1" fill="#b7b7b7"/><rect x="617" y="48" width="1" height="1" fill="#989898"/><rect x="617" y="10" width="1" height="1" fill="#b7b7b7"/><rect x="617" y="55" width="1" height="2" fill="#e8e8e8"/><rect x="617" y="543" width="1" height="2" fill="#e8e8e8"/><rect x="656" y="581" width="1" height="1" fill="#797979"/><rect x="656" y="505" width="1" height="1" fill="#797979"/><rect x="656" y="467" width="1" height="1" fill="#989898"/><rect x="656" y="429" width="1" height="1" fill="#797979"/><rect x="656" y="391" width="1" height="1" fill="#989898"/><rect x="656" y="353" width="1" height="1" fill="#797979"/><rect x="656" y="315" width="1" height="1" fill="#989898"/><rect x="656" y="277" width="1" height="1" fill="#797979"/><rect x="656" y="238" width="1" height="1" fill="#989898"/><rect x="656" y="200" width="1" height="1" fill="#797979"/><rect x="656" y="162" width="1" height="1" fill="#989898"/><rect x="656" y="124" width="1" height="1" fill="#797979"/><rect x="656" y="86" width="1" height="1" fill="#989898"/><rect x="656" y="48" width="1" height="1" fill="#797979"/><rect x="656" y="10" width="1" height="1" fill="#989898"/><rect x="656" y="55" width="1" height="2" fill="#c9c9c9"/><rect x="656" y="543" width="1" height="2" fill="#c9c9c9"/><rect x="694" y="581" width="1" height="1" fill="#989898"/><rect x="694" y="505" width="1" height="1" fill="#989898"/><rect x="694" y="467" width="1" height="1" fill="#b7b7b7"/><rect x="694" y="429" width="1" height="1" fill="#989898"/><rect x="694" y="391" width="1" height="1" fill="#b7b7b7"/><rect x="694" y="353" width="1" height="1" fill="#989898"/><rect x="694" y="315" width="1" height="1" fill="#b7b7b7"/><rect x="694" y="277" width="1" height="1" fill="#989898"/><rect x="694" y="238" width="1" height="1" fill="#b7b7b7"/><rect x="694" y="200" width="1" height="1" fill="#989898"/><rect x="694" y="162" width="1" height="1" fill="#b7b7b7"/><rect x="694" y="124" width="1" height="1" fill="#989898"/><rect x="694" y="86" width="1" height="1" fill="#b7b7b7"/><rect x="694" y="48" width="1" height="1" fill="#989898"/><rect x="694" y="10" width="1" height="1" fill="#b7b7b7"/><rect x="694" y="55" width="1" height="2" fill="#e8e8e8"/><rect x="694" y="543" width="1" height="2" fill="#e8e8e8"/><rect x="732" y="581" width="1" height="1" fill="#797979"/><rect x="732" y="505" width="1" height="1" fill="#797979"/><rect x="732" y="467" width="1" height="1" fill="#989898"/><rect x="732" y="429" width="1" height="1" fill="#797979"/><rect x="732" y="391" width="1" height="1" fill="#989898"/><rect x="732" y="353" width="1" height="1" fill="#797979"/><rect x="732" y="315" width="1" height="1" fill="#989898"/><rect x="732" y="277" width="1" height="1" fill="#797979"/><rect x="732" y="238" width="1" height="1" fill="#989898"/><rect x="732" y="200" width="1" height="1" fill="#797979"/><rect x="732" y="162" width="1" height="1" fill="#989898"/><rect x="732" y="124" width="1" height="1" fill="#797979"/><rect x="732" y="86" width="1" height="1" fill="#989898"/><rect x="732" y="48" width="1" height="1" fill="#797979"/><rect x="732" y="10" width="1" height="1" fill="#989898"/><rect x="732" y="55" width="1" height="2" fill="#c9c9c9"/><rect x="732" y="543" width="1" height="2" fill="#c9c9c9"/><rect x="7" y="48" width="2" height="1" fill="#acacac"/><rect x="7" y="10" width="2" height="1" fill="#cbcbcb"/><rect x="7" y="581" width="2" height="1" fill="#acacac"/><rect x="7" y="505" width="2" height="1" fill="#c9c9c9"/><rect x="7" y="467" width="2" height="1" fill="#e8e8e8"/><rect x="7" y="429" width="2" height="1" fill="#c9c9c9"/><rect x="7" y="391" width="2" height="1" fill="#e8e8e8"/><rect x="7" y="353" width="2" height="1" fill="#c9c9c9"/><rect x="7" y="315" width="2" height="1" fill="#e8e8e8"/><rect x="7" y="277" width="2" height="1" fill="#c9c9c9"/><rect x="7" y="238" width="2" height="1" fill="#e8e8e8"/><rect x="7" y="200" width="2" height="1" fill="#c9c9c9"/><rect x="7" y="162" width="2" height="1" fill="#e8e8e8"/><rect x="7" y="124" width="2" height="1" fill="#c9c9c9"/><rect x="7" y="86" width="2" height="1" fill="#e8e8e8"/><rect x="7" y="55" width="2" height="2" fill="#a4a4a4"/><rect x="7" y="543" width="2" height="2" fill="#a4a4a4"/><rect x="739" y="505" width="2" height="1" fill="#c9c9c9"/><rect x="739" y="467" width="2" height="1" fill="#e8e8e8"/><rect x="739" y="429" width="2" height="1" fill="#c9c9c9"/><rect x="739" y="391" width="2" height="1" fill="#e8e8e8"/><rect x="739" y="353" width="2" height="1" fill="#c9c9c9"/><rect x="739" y="315" width="2" height="1" fill="#e8e8e8"/><rect x="739" y="277" width="2" height="1" fill="#c9c9c9"/><rect x="739" y="238" width="2" height="1" fill="#e8e8e8"/><rect x="739" y="200" width="2" height="1" fill="#c9c9c9"/><rect x="739" y="162" width="2" height="1" fill="#e8e8e8"/><rect x="739" y="124" width="2" height="1" fill="#c9c9c9"/><rect x="739" y="86" width="2" height="1" fill="#e8e8e8"/><rect x="739" y="55" width="2" height="2" fill="#a4a4a4"/><rect x="739" y="543" width="2" height="2" fill="#a4a4a4"/></svg>
<div class="gl" style="left:5px;top:606.5px">-100</div>
<div class="gl" style="left:5px;top:454.1px">100</div>
<div class="gl" style="left:5px;top:377.9px">200</div>
<div class="gl" style="left:5px;top:301.7px">300</div>
<div class="gl" style="left:5px;top:225.5px">400</div>
<div class="gl" style="left:5px;top:149.3px">500</div>
<div class="gl" style="left:5px;top:73.1px">600</div>
<div class="gl" style="left:5px;top:-3.1px">700</div>
<div class="gl" style="left:13.3px;top:588.0px">0</div>
<div class="gl" style="left:89.5px;top:588.0px">100</div>
<div class="gl" style="left:165.7px;top:588.0px">200</div>
<div class="gl" style="left:241.9px;top:588.0px">300</div>
<div class="gl" style="left:318.1px;top:588.0px">400</div>
<div class="gl" style="left:394.3px;top:588.0px">500</div>
<div class="gl" style="left:470.5px;top:588.0px">600</div>
<div class="gl" style="left:546.7px;top:588.0px">700</div>
<div class="gl" style="left:622.9px;top:588.0px">800</div>
<div class="gl" style="left:699.1px;top:588.0px">900</div>
</div>
<div class="abs" style="left:355px;top:38px;width:743px;height:611px;overflow:hidden"><svg style="left:0;top:0" width="743" height="611" viewBox="355 38 743 611"><rect x="637.7" y="243" width="183" height="190.4" fill="#f3f3f3"/><rect x="684.5" y="283.5" width="74" height="72.5" fill="none" stroke="#2a9df4" stroke-width="1"/><rect x="721.5" y="294.5" width="25.2" height="25.1" fill="#8080fa"/><path d="M734.4 295H746.2V306.8" stroke="#2424e6" stroke-width="1.3" fill="none"/><line x1="721.5" y1="319.6" x2="721.5" y2="179" stroke="#1fdc1f" stroke-width="1"/><polygon points="721.5,154.6 731,179.8 712,179.8" fill="#00d200"/><polygon points="721.5,154.6 731,179.8 721.5,179.8" fill="#00b800" opacity="0.55"/><line x1="721.5" y1="319.6" x2="862" y2="319.6" stroke="#e22" stroke-width="1"/><polygon points="885.4,319.6 861.6,310 861.6,329.2" fill="#d40000"/><polygon points="885.4,319.6 861.6,329.2 861.6,319.6" fill="#8e0000" opacity="0.6"/><rect x="1027" y="86.3" width="12" height="3.4" fill="#9a9a9a"/><rect x="1027.6" y="82.2" width="1.4" height="11.6" fill="#111"/><polygon points="1014.2,88 1028,82.4 1028,93.6" fill="#d9d9d9"/><polygon points="1014.2,88 1028,93.6 1028,88" fill="#b5b5b5"/><rect x="1045.4" y="69" width="2.2" height="12" fill="#10d010"/><rect x="1041" y="68.6" width="11" height="1.6" fill="#111"/><polygon points="1046.5,55 1052,69.4 1041,69.4" fill="#00d000"/><polygon points="1046.5,55 1052,69.4 1046.5,69.4" fill="#00b400" opacity="0.6"/><rect x="1054" y="86.8" width="11" height="2.2" fill="#c01818"/><rect x="1063.8" y="82.2" width="1.6" height="11.6" fill="#111"/><polygon points="1078.8,88 1065,82.4 1065,93.6" fill="#e00000"/><polygon points="1078.8,88 1065,93.6 1065,88" fill="#a80000" opacity="0.7"/><rect x="1045.4" y="95" width="2.2" height="12" fill="#f0f0f0"/><rect x="1041" y="105.6" width="11" height="1.6" fill="#111"/><polygon points="1046.5,121 1052,106.8 1041,106.8" fill="#dcdcdc"/><polygon points="1046.5,121 1052,106.8 1046.5,106.8" fill="#b8b8b8"/><rect x="1038.3" y="80" width="16.2" height="16" fill="#e2e2e2"/><g fill="#fff"><circle cx="363.2" cy="580.4" r="10.3"/><rect x="353" y="570.8" width="17.6" height="9"/><circle cx="363.8" cy="566.6" r="4.6"/><circle cx="354.6" cy="567.4" r="3.6"/><circle cx="369.8" cy="569.6" r="1.4"/><polygon points="370.4,579.6 378,571.8 378,585 371.4,582.2"/></g><g stroke="#fff" stroke-width="2" stroke-linecap="round"><path d="M356.8 592L355.8 594M363 593.2V595.8M369.2 592L370.2 594M373 587.8L375 588.8"/></g></svg><div class="gl" style="left:5px;top:530.3px;color:#8a8a8a">0</div></div>
<div class="panel" style="left:354px;top:652px;width:745px;height:170px;"></div>
<div class="abs" style="left:355px;top:653px;width:743px;height:24px;background:#2d2d2d"></div>
<div class="abs" style="left:355px;top:677px;width:743px;height:1px;background:#4c4c4c"></div>
<div class="abs" style="left:355px;top:653px;width:79.5px;height:24px;background:#2d2d2d;border-right:1px solid #4a4a4a"></div>
<div class="lab cjk" style="left:377.0px;top:654px;color:#c6c6c6;line-height:23px;height:24px">资源预览</div>
<div class="abs" style="left:434.5px;top:653px;width:68.0px;height:25px;background:#484848;border-left:1px solid #535353;border-right:1px solid #535353"></div>
<div class="lab cjk" style="left:457.0px;top:654px;color:#d6d6d6;line-height:23px;height:24px">控制台</div>
<div class="abs" style="left:502.5px;top:653px;width:91.0px;height:24px;background:#2d2d2d;border-right:1px solid #4a4a4a"></div>
<div class="lab cjk" style="left:524.5px;top:654px;color:#c6c6c6;line-height:23px;height:24px">动画编辑器</div>
<div class="abs" style="left:593.5px;top:653px;width:92.0px;height:24px;background:#2d2d2d;border-right:1px solid #4a4a4a"></div>
<div class="lab cjk" style="left:616.5px;top:654px;color:#c6c6c6;line-height:23px;height:24px">摄像机预览</div>
<svg style="left:363px;top:659px" width="10" height="12" viewBox="-0.5 -0.5 10 12"><rect x="0.3" y="1.2" width="8.4" height="9.6" rx="1.2" fill="#4a4a4a"/><rect x="2.4" y="0" width="4.2" height="2.2" rx="0.6" fill="#4a4a4a"/><path d="M2.2 4.4H6.8M2.2 6.4H6.8M2.2 8.4H6.8" stroke="#2d2d2d" stroke-width="0.9"/></svg>
<svg style="left:442px;top:659px" width="13" height="11" viewBox="0 -0.5 13 11"><rect x="0.6" y="0.6" width="10.8" height="8.8" stroke="#bdbdbd" stroke-width="1.2" fill="none"/><path d="M2.6 3L4.6 5L2.6 7M5.6 7H8.6" stroke="#bdbdbd" stroke-width="1" fill="none"/></svg>
<svg style="left:511px;top:659px" width="12" height="12" viewBox="0 0 12 12"><circle cx="6.8" cy="1.6" r="1.4" fill="#6a6a6a"/><path d="M1.6 3.4L5 2.6L7.4 4.6L9.6 4.6M5.6 3.4L4.4 6.4L6.6 8L5.4 10.6M4.4 6.4L1.6 7.6" stroke="#6a6a6a" stroke-width="1.4" fill="none"/></svg>
<svg style="left:601px;top:661px" width="13" height="8" viewBox="0 0 13 8"><rect x="0" y="0" width="8.6" height="6.4" rx="1" fill="#6a6a6a"/><path d="M9 2.4L11.6 0.8V5.6L9 4Z" fill="#6a6a6a"/></svg>
<svg style="left:1075px;top:660px" width="10" height="10" viewBox="0 -0.5 10 10"><path d="M0 1H9M0 4.2H9M0 7.4H9" stroke="#c4c4c4" stroke-width="1.5"/></svg>
<div class="abs" style="left:355px;top:697px;width:743px;height:110px;background:#2e2e2e"></div>
<div class="abs" style="left:355px;top:697px;width:731px;height:24px;background:#383838;line-height:24px;white-space:nowrap;padding-left:12px;color:#c8c8c8">[Package] native@1.0.0 enable</div>
<div class="abs" style="left:355px;top:721px;width:731px;height:24px;background:#2e2e2e;line-height:24px;white-space:nowrap;padding-left:12px;color:#c8c8c8">[Package] oppo-mini-game@1.0.0 enable</div>
<div class="abs" style="left:355px;top:745px;width:731px;height:24px;background:#383838;line-height:24px;white-space:nowrap;padding-left:12px;color:#c8c8c8">[Package] vivo-mini-game@1.0.0 enable</div>
<div class="abs" style="left:355px;top:769px;width:731px;height:24px;background:#2e2e2e;line-height:24px;white-space:nowrap;padding-left:12px;color:#c8c8c8">[Package] web-desktop@1.0.0 enable</div>
<div class="abs" style="left:355px;top:793px;width:731px;height:24px;background:#383838;line-height:24px;white-space:nowrap;padding-left:12px;color:#c8c8c8">[Package] web-mobile@1.0.0 enable</div>
<div class="abs" style="left:355px;top:678px;width:743px;height:28px;background:#484848"></div>
<div class="abs" style="left:355px;top:706px;width:743px;height:1px;background:#555"></div>
<svg style="left:363px;top:686px" width="11" height="12" viewBox="-0.5 0 11 12"><path d="M4 0.4H6V4.4H4Z" fill="#c8c8c8"/><path d="M1.2 4.6H8.8V6.6H1.2Z" fill="#c8c8c8"/><path d="M0.6 7.2H9.4L9.8 10.8H0.2Z" fill="#c8c8c8"/></svg>
<div class="lab" style="left:378px;top:682px;color:#cfcfcf">Clear</div>
<div class="inp" style="left:415px;top:682px;width:160px;height:19px;"></div>
<div class="abs" style="left:583px;top:684px;width:15px;height:15px;background:#2e2e2e;border:1px solid #6c6c6c;border-radius:3.5px"></div>
<div class="lab cjk" style="left:601.5px;top:682px;color:#cfcfcf">正则</div>
<div class="abs" style="left:634.5px;top:682px;width:61px;height:18.5px;background:#5b5b5b;border-radius:3px"></div>
<div class="lab" style="left:644.5px;top:681.5px;color:#d0d0d0">all</div>
<svg style="left:677px;top:689px" width="10" height="8" viewBox="-0.5 0 10 8"><polygon points="0,0 8.6,0 4.3,6.8" fill="#c8c8c8"/></svg>
<svg style="left:706px;top:685px" width="11" height="14" viewBox="0 -0.5 11 14"><path d="M1.6 0.7H6L9.3 4V10.6C9.3 11.4 8.8 11.9 8 11.9H2.6C1.4 11.9 0.7 11.2 0.7 10V1.6C0.7 1 1 0.7 1.6 0.7Z" stroke="#c8c8c8" stroke-width="1.3" fill="none"/><path d="M3 6.2H7.6M3 8.6H6.4" stroke="#c8c8c8" stroke-width="1.3"/></svg>
<div class="panel" style="left:1101px;top:-17px;width:680px;height:840px;background:#474747"></div>
<div class="abs" style="left:1102px;top:-16px;width:670px;height:24px;background:#2e2e2e"></div>
<div class="abs" style="left:1102px;top:8px;width:670px;height:1px;background:#4f4f4f"></div>
<div class="abs" style="left:1102px;top:-16px;width:91px;height:25px;background:#474747;border-right:1px solid #555"></div>
<div class="abs" style="left:1110.5px;top:-8px;width:9px;height:9.4px;background:#2c2c2c;border-radius:1px"></div>
<div class="lab cjk" style="left:1124px;top:-15px;color:#e2e2e2;line-height:23px;height:24px">属性检查器</div>
<svg style="left:1112px;top:17px" width="8" height="12" viewBox="0 -0.5 8 12"><polygon points="6.6,0 6.6,10.6 0,5.3" fill="#4a97e6"/></svg>
<svg style="left:1141px;top:17px" width="8" height="12" viewBox="0 -0.5 8 12"><polygon points="0.2,0 6.6,5.3 0.2,10.6" fill="#8c8c8c"/></svg>
<div class="cb" style="left:1109px;top:50px;width:14px"></div><svg style="left:1109px;top:50px" width="15" height="15" viewBox="-0 0 15 15"><path d="M2.4 6.9L5.7 10.3L11.2 4.1" stroke="#3f86f2" stroke-width="2.1" fill="none"/></svg>
<div class="inp" style="left:1127px;top:44px;width:660px;height:26px;line-height:24px;padding-left:6px;line-height:23px;">WLXZ_bn_beibao_00</div>
<svg style="left:1113px;top:80px" width="9" height="6" viewBox="0 -0.5 9 6"><polygon points="0,0 8,0 4.0,5" fill="#c8c8c8"/></svg>
<div class="lab" style="left:1128.5px;top:73px;color:#d0d0d0">Node</div>
<div class="abs" style="left:1110px;top:95px;width:660px;height:1px;background:#5a5a5a"></div>
<div class="lab" style="left:1119.5px;top:102px;color:#cfcfcf">Position</div>
<div class="mono" style="left:1415.4px;top:102.5px">X</div>
<div class="inp" style="left:1427px;top:100px;width:125px;height:24px;line-height:22px;padding-left:8px;">0</div>
<div class="mono" style="left:1557.4px;top:102.5px">Y</div>
<div class="inp" style="left:1569px;top:100px;width:124px;height:24px;line-height:22px;padding-left:8px;">-100.984</div>
<div class="mono" style="left:1699px;top:102.5px">Z</div>
<div class="inp" style="left:1711px;top:100px;width:80px;height:24px;line-height:22px;padding-left:8px;">0</div>
<div class="lab" style="left:1119.5px;top:134px;color:#cfcfcf">Rotation</div>
<div class="mono" style="left:1415.4px;top:134.5px">X</div>
<div class="inp" style="left:1427px;top:132px;width:125px;height:24px;line-height:22px;padding-left:8px;">0</div>
<div class="mono" style="left:1557.4px;top:134.5px">Y</div>
<div class="inp" style="left:1569px;top:132px;width:124px;height:24px;line-height:22px;padding-left:8px;">0</div>
<div class="mono" style="left:1699px;top:134.5px">Z</div>
<div class="inp" style="left:1711px;top:132px;width:80px;height:24px;line-height:22px;padding-left:8px;">0</div>
<div class="lab" style="left:1119.5px;top:166px;color:#cfcfcf">Scale</div>
<div class="mono" style="left:1415.4px;top:166.5px">X</div>
<div class="inp" style="left:1427px;top:164px;width:125px;height:24px;line-height:22px;padding-left:8px;">1</div>
<div class="mono" style="left:1557.4px;top:166.5px">Y</div>
<div class="inp" style="left:1569px;top:164px;width:124px;height:24px;line-height:22px;padding-left:8px;">1</div>
<div class="mono" style="left:1699px;top:166.5px">Z</div>
<div class="inp" style="left:1711px;top:164px;width:80px;height:24px;line-height:22px;padding-left:8px;">1</div>
<div class="lab" style="left:1119.5px;top:198px;color:#cfcfcf">Layer</div>
<div class="dd" style="left:1410px;top:196px;width:400px">DEFAULT</div>
<svg style="left:1113px;top:235px" width="9" height="6" viewBox="0 -0.5 9 6"><polygon points="0,0 8,0 4.0,5" fill="#c8c8c8"/></svg>
<div class="cb" style="left:1128px;top:230.5px;width:14px"></div><svg style="left:1128px;top:230px" width="15" height="15" viewBox="-0 -0.5 15 15"><path d="M2.4 6.9L5.7 10.3L11.2 4.1" stroke="#3f86f2" stroke-width="2.1" fill="none"/></svg>
<div class="lab" style="left:1146.5px;top:228px;color:#d0d0d0">cc.UITransform</div>
<div class="abs" style="left:1110px;top:253.5px;width:660px;height:1px;background:#5a5a5a"></div>
<div class="lab" style="left:1119.5px;top:260px;color:#cfcfcf">ContentSize</div>
<div class="mono" style="left:1415.4px;top:260.5px;transform:scaleX(0.76);transform-origin:0 50%">W</div>
<div class="inp" style="left:1427px;top:258px;width:196px;height:24px;line-height:22px;padding-left:8px;">97</div>
<div class="mono" style="left:1628px;top:260.5px;transform:scaleX(0.86);transform-origin:0 50%">H</div>
<div class="inp" style="left:1639.5px;top:258px;width:160px;height:24px;line-height:22px;padding-left:8px;">95</div>
<div class="lab" style="left:1119.5px;top:292px;color:#cfcfcf">AnchorPoint</div>
<div class="mono" style="left:1415.2px;top:292.5px">X</div>
<div class="inp" style="left:1427px;top:290px;width:196px;height:24px;line-height:22px;padding-left:8px;">0.5</div>
<div class="mono" style="left:1628px;top:292.5px">Y</div>
<div class="inp" style="left:1639.5px;top:290px;width:160px;height:24px;line-height:22px;padding-left:8px;">0.5</div>
<div class="lab" style="left:1119.5px;top:324px;color:#cfcfcf">Priority</div>
<div class="inp" style="left:1410px;top:322px;width:400px;height:24px;line-height:22px;padding-left:8px;">0</div>
<svg style="left:1113px;top:361px" width="9" height="6" viewBox="0 -0.5 9 6"><polygon points="0,0 8,0 4.0,5" fill="#c8c8c8"/></svg>
<div class="cb" style="left:1128px;top:356.5px;width:14px"></div><svg style="left:1128px;top:356px" width="15" height="15" viewBox="-0 -0.5 15 15"><path d="M2.4 6.9L5.7 10.3L11.2 4.1" stroke="#3f86f2" stroke-width="2.1" fill="none"/></svg>
<div class="lab" style="left:1146.5px;top:354px;color:#d0d0d0">cc.Sprite</div>
<div class="abs" style="left:1110px;top:379px;width:660px;height:1px;background:#5a5a5a"></div>
<div class="lab" style="left:1119.5px;top:386px;color:#cfcfcf">Type</div>
<div class="dd" style="left:1410px;top:384px;width:400px">SIMPLE</div>
<svg style="left:1125px;top:421px" width="6" height="9" viewBox="0 0 6 9"><polygon points="0,0 5,4.0 0,8" fill="#c8c8c8"/></svg>
<div class="lab" style="left:1139px;top:415px;color:#cfcfcf">Materials</div>
<div class="inp" style="left:1412px;top:413px;width:400px;height:24px;line-height:22px;padding-left:8px;">0</div>
<div class="lab" style="left:1119.5px;top:444px;color:#cfcfcf">SrcBlendFactor</div>
<div class="dd" style="left:1410px;top:442px;width:400px">SRC_ALPHA</div>
<div class="lab" style="left:1119.5px;top:471.6px;color:#cfcfcf">DstBlendFactor</div>
<div class="dd" style="left:1410px;top:470px;width:400px">ONE_MINUS_SRC_ALPHA</div>
<div class="lab" style="left:1119.5px;top:500px;color:#cfcfcf">Color</div>
<div class="abs" style="left:1410.5px;top:499px;width:400px;height:22px;background:#fff;border-radius:3px 0 0 3px"></div>
<div class="abs" style="left:1410.5px;top:517px;width:400px;height:1px;background:#5c5c5c"></div>
<div class="lab" style="left:1119.5px;top:538px;color:#cfcfcf">SpriteAtlas</div>
<div class="abs" style="left:1410px;top:537px;width:400px;height:24.5px;background:#2e2e2e;border:1px solid #585858;border-radius:3px"></div>
<div class="abs" style="left:1410px;top:529px;width:70px;height:9px;background:#2e2e2e;border:1px solid #555;border-bottom:none;border-radius:3px 3px 0 0"></div>
<svg style="left:1416px;top:530px" width="7" height="7" viewBox="0 -0.6 7 7"><polygon points="3,0 6,3 3,6 0,3" fill="#4a97e6"/></svg>
<div class="lab" style="left:1424px;top:528px;font-size:8px;line-height:11px;height:11px;color:#c4c4c4;-webkit-text-stroke:0.2px currentColor">cc.SpriteAtlas</div>
<div class="lab" style="left:1417px;top:538.5px;color:#6c6c6c">cc.SpriteAtlas</div>
<div class="lab" style="left:1119.5px;top:578px;color:#cfcfcf">SpriteFrame</div>
<div class="abs" style="left:1410px;top:577px;width:400px;height:24.5px;background:#2e2e2e;border:1px solid #585858;border-radius:3px"></div>
<div class="abs" style="left:1413px;top:579px;width:400px;height:20px;background:#1960bd"></div>
<div class="abs" style="left:1410px;top:569px;width:75px;height:9px;background:#2e2e2e;border:1px solid #555;border-bottom:none;border-radius:3px 3px 0 0"></div>
<svg style="left:1416px;top:570px" width="7" height="7" viewBox="0 -0.6 7 7"><polygon points="3,0 6,3 3,6 0,3" fill="#4a97e6"/></svg>
<div class="lab" style="left:1424px;top:568px;font-size:8px;line-height:11px;height:11px;color:#c4c4c4;-webkit-text-stroke:0.2px currentColor">cc.SpriteFrame</div>
<div class="lab" style="left:1417px;top:578.5px;color:#e0e0e0">WLXZ_bn_beibao_00</div>
<div class="lab" style="left:1119.5px;top:608px;color:#cfcfcf">Trim</div>
<div class="cb" style="left:1410px;top:611px;width:15px"></div><svg style="left:1410px;top:611px" width="15" height="15" viewBox="-0.6 0 15 15"><path d="M2.4 6.9L5.7 10.3L11.2 4.1" stroke="#3f86f2" stroke-width="2.1" fill="none"/></svg>
<div class="lab" style="left:1119.5px;top:636px;color:#cfcfcf">Grayscale</div>
<div class="cb" style="left:1410px;top:639px;width:15px"></div>
<div class="lab" style="left:1119.5px;top:664px;color:#cfcfcf">SizeMode</div>
<div class="dd" style="left:1410px;top:662px;width:400px">TRIMMED</div>
<div class="abs cjk" style="left:1436px;top:701px;width:72px;height:24px;background:#585858;border-radius:4px;text-align:center;line-height:25px;color:#d0d0d0">添加组件</div>
<div class="abs" style="left:1561px;top:645px;width:230px;height:155px;background:rgba(12,12,12,0.57);border:1px solid #a4a4a4;border-radius:2.5px"></div>
<div class="abs" style="left:1563px;top:692.8px;width:131.5px;height:59.4px;background:#fff"></div>
<svg style="left:1564px;top:693.8px;overflow:hidden" width="129.5" height="57.4" viewBox="0 0 129.5 57.4"><rect x="0" y="0" width="129.5" height="57.4" fill="#2e2e2e"/><rect x="-1.60" y="-1.10" width="25.41" height="2.75" fill="#404040"/><rect x="1.72" y="-0.23" width="18.19" height="1.59" fill="#2e2e2e"/><rect x="-1.60" y="12.06" width="25.41" height="1.45" fill="#1a5fbf"/><rect x="0.78" y="2.37" width="2.31" height="0.65" fill="#b0b0b0" opacity="0.22"/><rect x="0.71" y="3.82" width="3.75" height="0.65" fill="#b0b0b0" opacity="0.22"/><rect x="0.71" y="5.26" width="5.05" height="0.65" fill="#b0b0b0" opacity="0.22"/><rect x="0.71" y="6.71" width="2.02" height="0.65" fill="#b0b0b0" opacity="0.22"/><rect x="1.72" y="8.15" width="4.04" height="0.65" fill="#b0b0b0" opacity="0.32"/><rect x="2.73" y="9.60" width="1.73" height="0.65" fill="#b0b0b0" opacity="0.32"/><rect x="3.74" y="11.05" width="2.89" height="0.65" fill="#b0b0b0" opacity="0.32"/><rect x="4.75" y="12.49" width="8.38" height="0.65" fill="#e0a040" opacity="0.32"/><rect x="4.75" y="13.94" width="8.38" height="0.65" fill="#b0b0b0" opacity="0.32"/><rect x="4.75" y="15.38" width="8.38" height="0.65" fill="#b0b0b0" opacity="0.32"/><rect x="4.75" y="16.83" width="8.38" height="0.65" fill="#b0b0b0" opacity="0.32"/><rect x="4.75" y="18.28" width="8.38" height="0.65" fill="#b0b0b0" opacity="0.32"/><rect x="4.75" y="19.72" width="8.38" height="0.65" fill="#b0b0b0" opacity="0.32"/><rect x="4.75" y="21.17" width="8.38" height="0.65" fill="#b0b0b0" opacity="0.32"/><rect x="4.75" y="22.61" width="8.38" height="0.65" fill="#b0b0b0" opacity="0.32"/><rect x="-1.60" y="38.38" width="25.41" height="0.29" fill="#444"/><rect x="-1.60" y="38.66" width="6.21" height="1.81" fill="#484848"/><rect x="-1.60" y="40.47" width="25.41" height="2.10" fill="#444"/><rect x="3.96" y="40.69" width="15.81" height="1.59" fill="#2e2e2e"/><rect x="-0.44" y="39.03" width="4.33" height="0.87" fill="#ccc" opacity="0.5"/><rect x="-0.30" y="43.29" width="3.61" height="0.65" fill="#d8b050" opacity="0.45"/><rect x="0.35" y="44.74" width="3.61" height="0.65" fill="#3a9be6" opacity="0.45"/><rect x="0.35" y="46.18" width="3.18" height="0.65" fill="#3a9be6" opacity="0.45"/><rect x="1.29" y="47.63" width="3.03" height="0.65" fill="#e0a040" opacity="0.45"/><rect x="0.35" y="49.08" width="3.61" height="0.65" fill="#d8b050" opacity="0.45"/><rect x="0.57" y="50.52" width="3.61" height="0.65" fill="#20b8d0" opacity="0.45"/><rect x="0.57" y="51.97" width="4.33" height="0.65" fill="#3a9be6" opacity="0.45"/><rect x="-1.60" y="52.98" width="25.41" height="1.45" fill="#454545"/><rect x="0.35" y="53.41" width="9.39" height="0.65" fill="#a08080" opacity="0.45"/><rect x="-0.30" y="54.86" width="4.04" height="0.65" fill="#d8b050" opacity="0.45"/><rect x="23.81" y="-1.10" width="0.22" height="58.13" fill="#484848"/><rect x="24.03" y="-1.10" width="53.72" height="2.75" fill="#464646"/><rect x="24.03" y="1.65" width="53.72" height="44.18" fill="#303030"/><line x1="27.38" y1="1.65" x2="27.38" y2="45.82" stroke="#666" stroke-width="0.35" opacity="0.45"/><line x1="30.13" y1="1.65" x2="30.13" y2="45.82" stroke="#888" stroke-width="0.35" opacity="0.45"/><line x1="32.88" y1="1.65" x2="32.88" y2="45.82" stroke="#666" stroke-width="0.35" opacity="0.45"/><line x1="35.63" y1="1.65" x2="35.63" y2="45.82" stroke="#888" stroke-width="0.35" opacity="0.45"/><line x1="38.38" y1="1.65" x2="38.38" y2="45.82" stroke="#666" stroke-width="0.35" opacity="0.45"/><line x1="41.14" y1="1.65" x2="41.14" y2="45.82" stroke="#888" stroke-width="0.35" opacity="0.45"/><line x1="43.89" y1="1.65" x2="43.89" y2="45.82" stroke="#666" stroke-width="0.35" opacity="0.45"/><line x1="46.64" y1="1.65" x2="46.64" y2="45.82" stroke="#888" stroke-width="0.35" opacity="0.45"/><line x1="49.39" y1="1.65" x2="49.39" y2="45.82" stroke="#666" stroke-width="0.35" opacity="0.45"/><line x1="52.14" y1="1.65" x2="52.14" y2="45.82" stroke="#888" stroke-width="0.35" opacity="0.45"/><line x1="54.89" y1="1.65" x2="54.89" y2="45.82" stroke="#666" stroke-width="0.35" opacity="0.45"/><line x1="57.64" y1="1.65" x2="57.64" y2="45.82" stroke="#888" stroke-width="0.35" opacity="0.45"/><line x1="60.39" y1="1.65" x2="60.39" y2="45.82" stroke="#666" stroke-width="0.35" opacity="0.45"/><line x1="63.14" y1="1.65" x2="63.14" y2="45.82" stroke="#888" stroke-width="0.35" opacity="0.45"/><line x1="65.89" y1="1.65" x2="65.89" y2="45.82" stroke="#666" stroke-width="0.35" opacity="0.45"/><line x1="68.64" y1="1.65" x2="68.64" y2="45.82" stroke="#888" stroke-width="0.35" opacity="0.45"/><line x1="71.39" y1="1.65" x2="71.39" y2="45.82" stroke="#666" stroke-width="0.35" opacity="0.45"/><line x1="74.15" y1="1.65" x2="74.15" y2="45.82" stroke="#888" stroke-width="0.35" opacity="0.45"/><line x1="76.90" y1="1.65" x2="76.90" y2="45.82" stroke="#666" stroke-width="0.35" opacity="0.45"/><line x1="24.03" y1="43.73" x2="77.68" y2="43.73" stroke="#666" stroke-width="0.35" opacity="0.45"/><line x1="24.03" y1="40.98" x2="77.68" y2="40.98" stroke="#888" stroke-width="0.35" opacity="0.45"/><line x1="24.03" y1="38.22" x2="77.68" y2="38.22" stroke="#666" stroke-width="0.35" opacity="0.45"/><line x1="24.03" y1="35.47" x2="77.68" y2="35.47" stroke="#888" stroke-width="0.35" opacity="0.45"/><line x1="24.03" y1="32.71" x2="77.68" y2="32.71" stroke="#666" stroke-width="0.35" opacity="0.45"/><line x1="24.03" y1="29.96" x2="77.68" y2="29.96" stroke="#888" stroke-width="0.35" opacity="0.45"/><line x1="24.03" y1="27.21" x2="77.68" y2="27.21" stroke="#666" stroke-width="0.35" opacity="0.45"/><line x1="24.03" y1="24.45" x2="77.68" y2="24.45" stroke="#888" stroke-width="0.35" opacity="0.45"/><line x1="24.03" y1="21.70" x2="77.68" y2="21.70" stroke="#666" stroke-width="0.35" opacity="0.45"/><line x1="24.03" y1="18.94" x2="77.68" y2="18.94" stroke="#888" stroke-width="0.35" opacity="0.45"/><line x1="24.03" y1="16.19" x2="77.68" y2="16.19" stroke="#666" stroke-width="0.35" opacity="0.45"/><line x1="24.03" y1="13.43" x2="77.68" y2="13.43" stroke="#888" stroke-width="0.35" opacity="0.45"/><line x1="24.03" y1="10.68" x2="77.68" y2="10.68" stroke="#666" stroke-width="0.35" opacity="0.45"/><line x1="24.03" y1="7.92" x2="77.68" y2="7.92" stroke="#888" stroke-width="0.35" opacity="0.45"/><line x1="24.03" y1="5.17" x2="77.68" y2="5.17" stroke="#666" stroke-width="0.35" opacity="0.45"/><line x1="24.03" y1="2.41" x2="77.68" y2="2.41" stroke="#888" stroke-width="0.35" opacity="0.45"/><rect x="24.63" y="5.72" width="52.81" height="35.26" fill="none" stroke="#999" stroke-width="0.4" opacity="0.7"/><rect x="44.46" y="16.47" width="13.21" height="13.74" fill="#f1f1f1"/><rect x="47.82" y="19.40" width="5.34" height="5.24" fill="none" stroke="#9ccdf5" stroke-width="0.35"/><rect x="50.10" y="19.87" width="2.17" height="2.17" fill="#6a6af6"/><line x1="50.49" y1="21.96" x2="50.49" y2="11.91" stroke="#50d050" stroke-width="0.3" opacity="0.8"/><line x1="50.49" y1="22.01" x2="60.64" y2="22.01" stroke="#e05050" stroke-width="0.3" opacity="0.7"/><rect x="49.81" y="10.32" width="1.37" height="1.59" fill="#16c016"/><rect x="60.64" y="21.31" width="1.59" height="1.37" fill="#c01010"/><rect x="73.34" y="4.68" width="1.16" height="1.16" fill="#e0e0e0"/><rect x="73.63" y="3.02" width="0.65" height="0.94" fill="#16c016"/><rect x="75.29" y="4.90" width="0.94" height="0.72" fill="#c81818"/><rect x="71.68" y="4.97" width="0.94" height="0.58" fill="#bbb"/><rect x="73.63" y="6.64" width="0.65" height="0.94" fill="#bbb"/><rect x="24.10" y="39.82" width="1.30" height="1.88" fill="#fff"/><rect x="30.49" y="44.16" width="1.16" height="0.58" fill="#999" opacity="0.5"/><rect x="35.99" y="44.16" width="1.16" height="0.58" fill="#999" opacity="0.5"/><rect x="41.50" y="44.16" width="1.16" height="0.58" fill="#999" opacity="0.5"/><rect x="47.00" y="44.16" width="1.16" height="0.58" fill="#999" opacity="0.5"/><rect x="52.50" y="44.16" width="1.16" height="0.58" fill="#999" opacity="0.5"/><rect x="58.00" y="44.16" width="1.16" height="0.58" fill="#999" opacity="0.5"/><rect x="63.50" y="44.16" width="1.16" height="0.58" fill="#999" opacity="0.5"/><rect x="69.00" y="44.16" width="1.16" height="0.58" fill="#999" opacity="0.5"/><rect x="74.51" y="44.16" width="1.16" height="0.58" fill="#999" opacity="0.5"/><rect x="24.03" y="45.90" width="53.72" height="0.22" fill="#444"/><rect x="24.03" y="46.11" width="53.72" height="1.74" fill="#2d2d2d"/><rect x="29.73" y="46.11" width="4.98" height="1.81" fill="#484848"/><rect x="24.03" y="47.92" width="53.72" height="2.10" fill="#484848"/><rect x="28.44" y="48.28" width="11.41" height="1.30" fill="#2e2e2e"/><rect x="44.17" y="48.28" width="4.40" height="1.30" fill="#606060"/><rect x="25.62" y="46.55" width="3.47" height="0.80" fill="#ccc" opacity="0.5"/><rect x="31.40" y="46.55" width="2.60" height="0.80" fill="#ccc" opacity="0.5"/><rect x="36.30" y="46.55" width="4.33" height="0.80" fill="#ccc" opacity="0.5"/><rect x="42.95" y="46.55" width="4.33" height="0.80" fill="#ccc" opacity="0.5"/><rect x="25.69" y="48.57" width="2.02" height="0.65" fill="#ccc" opacity="0.5"/><rect x="24.03" y="50.02" width="53.72" height="7.01" fill="#2e2e2e"/><rect x="24.03" y="50.02" width="52.78" height="1.01" fill="#383838"/><rect x="24.90" y="50.02" width="11.84" height="0.51" fill="#c0c0c0" opacity="0.42"/><rect x="24.90" y="51.53" width="16.03" height="0.72" fill="#c0c0c0" opacity="0.42"/><rect x="24.03" y="52.76" width="52.78" height="1.74" fill="#383838"/><rect x="24.90" y="53.27" width="15.31" height="0.72" fill="#c0c0c0" opacity="0.42"/><rect x="24.90" y="55.00" width="14.58" height="0.72" fill="#c0c0c0" opacity="0.42"/><rect x="24.03" y="56.23" width="52.78" height="1.74" fill="#383838"/><rect x="24.90" y="56.74" width="14.15" height="0.72" fill="#c0c0c0" opacity="0.42"/><rect x="77.75" y="-1.10" width="0.18" height="58.13" fill="#4c4c4c"/><rect x="77.93" y="-1.10" width="57.76" height="58.13" fill="#474747"/><rect x="77.96" y="-1.10" width="6.57" height="0.65" fill="#484848"/><rect x="84.53" y="-1.10" width="50.54" height="0.58" fill="#2e2e2e"/><rect x="78.69" y="0.20" width="0.51" height="0.80" fill="#4a97e6"/><rect x="80.78" y="0.20" width="0.51" height="0.80" fill="#8c8c8c"/><rect x="78.47" y="2.52" width="1.01" height="1.01" fill="#2e2e2e"/><rect x="79.77" y="2.08" width="49.10" height="1.88" fill="#2e2e2e"/><rect x="80.27" y="2.66" width="8.38" height="0.72" fill="#ccc" opacity="0.4"/><rect x="79.84" y="4.54" width="2.17" height="0.72" fill="#cfcfcf" opacity="0.4"/><rect x="79.26" y="6.64" width="3.18" height="0.72" fill="#cfcfcf" opacity="0.4"/><rect x="79.26" y="8.95" width="3.32" height="0.72" fill="#cfcfcf" opacity="0.4"/><rect x="79.26" y="11.26" width="2.17" height="0.72" fill="#cfcfcf" opacity="0.4"/><rect x="79.26" y="13.58" width="2.17" height="0.72" fill="#cfcfcf" opacity="0.4"/><rect x="81.14" y="15.75" width="6.21" height="0.72" fill="#cfcfcf" opacity="0.4"/><rect x="79.26" y="18.06" width="4.77" height="0.72" fill="#cfcfcf" opacity="0.4"/><rect x="79.26" y="20.37" width="4.77" height="0.72" fill="#cfcfcf" opacity="0.4"/><rect x="79.26" y="22.69" width="2.89" height="0.72" fill="#cfcfcf" opacity="0.4"/><rect x="81.14" y="24.86" width="3.75" height="0.72" fill="#cfcfcf" opacity="0.4"/><rect x="79.26" y="27.17" width="1.88" height="0.72" fill="#cfcfcf" opacity="0.4"/><rect x="80.64" y="29.27" width="3.61" height="0.72" fill="#cfcfcf" opacity="0.4"/><rect x="79.26" y="31.36" width="6.06" height="0.72" fill="#cfcfcf" opacity="0.4"/><rect x="79.26" y="33.39" width="6.06" height="0.72" fill="#cfcfcf" opacity="0.4"/><rect x="79.26" y="35.41" width="2.17" height="0.72" fill="#cfcfcf" opacity="0.4"/><rect x="79.26" y="38.16" width="4.48" height="0.72" fill="#cfcfcf" opacity="0.4"/><rect x="79.26" y="41.05" width="4.91" height="0.72" fill="#cfcfcf" opacity="0.4"/><rect x="79.26" y="43.22" width="1.59" height="0.72" fill="#cfcfcf" opacity="0.4"/><rect x="79.26" y="45.24" width="4.04" height="0.72" fill="#cfcfcf" opacity="0.4"/><rect x="79.26" y="47.27" width="3.90" height="0.72" fill="#cfcfcf" opacity="0.4"/><rect x="101.43" y="6.13" width="9.03" height="1.74" fill="#2e2e2e"/><rect x="111.68" y="6.13" width="8.95" height="1.74" fill="#2e2e2e"/><rect x="121.93" y="6.13" width="6.86" height="1.74" fill="#2e2e2e"/><rect x="101.43" y="8.44" width="9.03" height="1.74" fill="#2e2e2e"/><rect x="111.68" y="8.44" width="8.95" height="1.74" fill="#2e2e2e"/><rect x="121.93" y="8.44" width="6.86" height="1.74" fill="#2e2e2e"/><rect x="101.43" y="10.76" width="9.03" height="1.74" fill="#2e2e2e"/><rect x="111.68" y="10.76" width="8.95" height="1.74" fill="#2e2e2e"/><rect x="121.93" y="10.76" width="6.86" height="1.74" fill="#2e2e2e"/><rect x="101.43" y="17.55" width="14.15" height="1.74" fill="#2e2e2e"/><rect x="116.81" y="17.55" width="11.99" height="1.74" fill="#2e2e2e"/><rect x="101.43" y="19.87" width="14.15" height="1.74" fill="#2e2e2e"/><rect x="116.81" y="19.87" width="11.99" height="1.74" fill="#2e2e2e"/><rect x="100.20" y="22.18" width="28.59" height="1.74" fill="#2e2e2e"/><rect x="100.35" y="28.76" width="28.45" height="1.74" fill="#2e2e2e"/><rect x="100.20" y="13.07" width="28.59" height="1.74" fill="#606060"/><rect x="100.20" y="26.66" width="28.59" height="1.74" fill="#606060"/><rect x="100.20" y="30.86" width="28.59" height="1.74" fill="#606060"/><rect x="100.20" y="32.88" width="28.59" height="1.74" fill="#606060"/><rect x="100.20" y="46.76" width="28.59" height="1.74" fill="#606060"/><rect x="100.20" y="34.98" width="28.59" height="1.59" fill="#ffffff"/><rect x="100.20" y="37.73" width="28.59" height="1.74" fill="#2e2e2e"/><rect x="100.20" y="40.62" width="28.59" height="1.74" fill="#2e2e2e"/><rect x="100.42" y="40.83" width="28.37" height="1.37" fill="#1a5fbf"/><rect x="100.20" y="43.08" width="1.08" height="1.01" fill="#2e2e2e"/><rect x="100.20" y="45.10" width="1.08" height="1.01" fill="#2e2e2e"/><rect x="102.08" y="49.58" width="5.20" height="1.74" fill="#5a5a5a"/><rect x="128.79" y="-1.10" width="0.14" height="58.13" fill="#444"/><polyline points="67.21,26.52 67.06,29.27 67.06,34.33 66.63,37.65" stroke="#e83434" stroke-width="0.55" fill="none" stroke-linecap="round" stroke-linejoin="round"/><polyline points="70.31,36.71 71.11,37.87" stroke="#e83434" stroke-width="0.55" fill="none" stroke-linecap="round" stroke-linejoin="round"/><polyline points="75.73,28.69 77.75,29.27 79.99,30.71 80.13,32.74 78.25,35.48 76.74,37.22 76.88,37.54 81.72,37.58" stroke="#e83434" stroke-width="0.55" fill="none" stroke-linecap="round" stroke-linejoin="round"/></svg>
<div class="abs" style="left:1694.5px;top:692px;width:1.5px;height:61px;background:#141414"></div>
<svg style="left:1696px;top:692px;overflow:hidden" width="70" height="61" viewBox="0 0 70 61"><rect x="0" y="0" width="70" height="61" fill="#323232" opacity="1"/><rect x="0" y="0" width="5.2" height="61" fill="#1f1f1f" opacity="1"/><rect x="5.2" y="0" width="64.8" height="1.1" fill="#e4e4e4" opacity="1"/><rect x="5.2" y="1.1" width="64.8" height="1.6" fill="#3c3c3c" opacity="1"/><rect x="7" y="1.5" width="9" height="0.9" fill="#9a9a9a" opacity="0.7"/><rect x="19.5" y="1.5" width="3.5" height="0.9" fill="#9a9a9a" opacity="0.7"/><rect x="25" y="1.5" width="4" height="0.9" fill="#9a9a9a" opacity="0.7"/><rect x="31.5" y="1.5" width="8" height="0.9" fill="#9a9a9a" opacity="0.7"/><rect x="48" y="1.5" width="3" height="0.9" fill="#9a9a9a" opacity="0.7"/><rect x="52.5" y="1.5" width="3" height="0.9" fill="#9a9a9a" opacity="0.7"/><rect x="43" y="1.4" width="4.6" height="1.1" fill="#2a7fd8" opacity="1"/><rect x="5.2" y="2.7" width="0.5" height="6" fill="#2a7fd8" opacity="0.6"/><rect x="58" y="2.7" width="12" height="58.3" fill="#373737" opacity="1"/><rect x="2.2" y="1.2" width="1.8" height="1.8" fill="#2d8fe6" opacity="1"/><rect x="2.2" y="4.6" width="1.8" height="1.6" fill="#e8e8e8" opacity="1"/><rect x="2.2" y="8" width="1.8" height="1.9" fill="#2d8fe6" opacity="1"/><rect x="2.8" y="55.8" width="1.2" height="1.1" fill="#3fc070" opacity="1"/><rect x="1.2" y="57.6" width="1.1" height="1.3" fill="#d05040" opacity="1"/><rect x="68.9" y="31.8" width="1.1" height="8.4" fill="#f0f0f0" opacity="1"/><rect x="59.2" y="49.4" width="8" height="0.7" fill="#c8c8c8" opacity="0.6"/><rect x="59.2" y="50.6" width="6" height="0.7" fill="#c8c8c8" opacity="0.6"/><rect x="59.2" y="51.8" width="9" height="0.7" fill="#c8c8c8" opacity="0.6"/><rect x="59.2" y="53.0" width="5" height="0.7" fill="#c8c8c8" opacity="0.6"/><rect x="59.2" y="54.199999999999996" width="7" height="0.7" fill="#c8c8c8" opacity="0.6"/><rect x="59.2" y="55.4" width="9" height="0.7" fill="#c8c8c8" opacity="0.6"/><rect x="59.2" y="56.599999999999994" width="10.8" height="0.7" fill="#c8c8c8" opacity="0.6"/><rect x="59.2" y="57.8" width="8" height="0.7" fill="#c8c8c8" opacity="0.6"/><rect x="59.2" y="59.0" width="10.8" height="0.7" fill="#c8c8c8" opacity="0.6"/></svg>
<svg style="left:0;top:0" width="1766" height="804" viewBox="0 0 1766 804"><path d="M953.2 382.4C953.8 392 953.6 399 952.6 406C951 414 950.8 420 950.8 430C950.6 445 950.8 460 950.8 475C951 490 950.6 500 949.4 509C948.6 515 946.6 520 946 524C945.4 528 945 532 944.6 535.6" stroke="#fb3434" stroke-width="6.8" fill="none" stroke-linecap="round" stroke-linejoin="round"/><path d="M996.6 523.4C998.6 524.6 1000 526 1000.8 528.4C1002 531 1004 534.6 1007.2 538.6" stroke="#fb3434" stroke-width="7.8" fill="none" stroke-linecap="round" stroke-linejoin="round"/><path d="M1071.4 412C1075 411.6 1079 411.6 1082 412.4C1088 414 1093 417.6 1099 420.4C1106 423.4 1112 425.4 1117.6 428.6C1123 431.8 1128 435.4 1130.6 439.6C1133.6 444.4 1134.6 450 1134.2 456C1133.8 461 1133 465 1131.4 468.6C1128.6 475 1125 481 1121.4 486.4C1116.6 493.4 1111 500 1105.8 506.4C1100.6 512.6 1095 517.6 1090.2 522.2C1087.4 525 1085 527.4 1084.6 530.2C1084.2 532.6 1085.2 534 1087 534.4C1098 535 1110 533.8 1121.4 533.8C1132 533.8 1143 534.4 1153.8 535" stroke="#fb3434" stroke-width="7" fill="none" stroke-linecap="round" stroke-linejoin="round"/></svg>
</div>
</body></html>
